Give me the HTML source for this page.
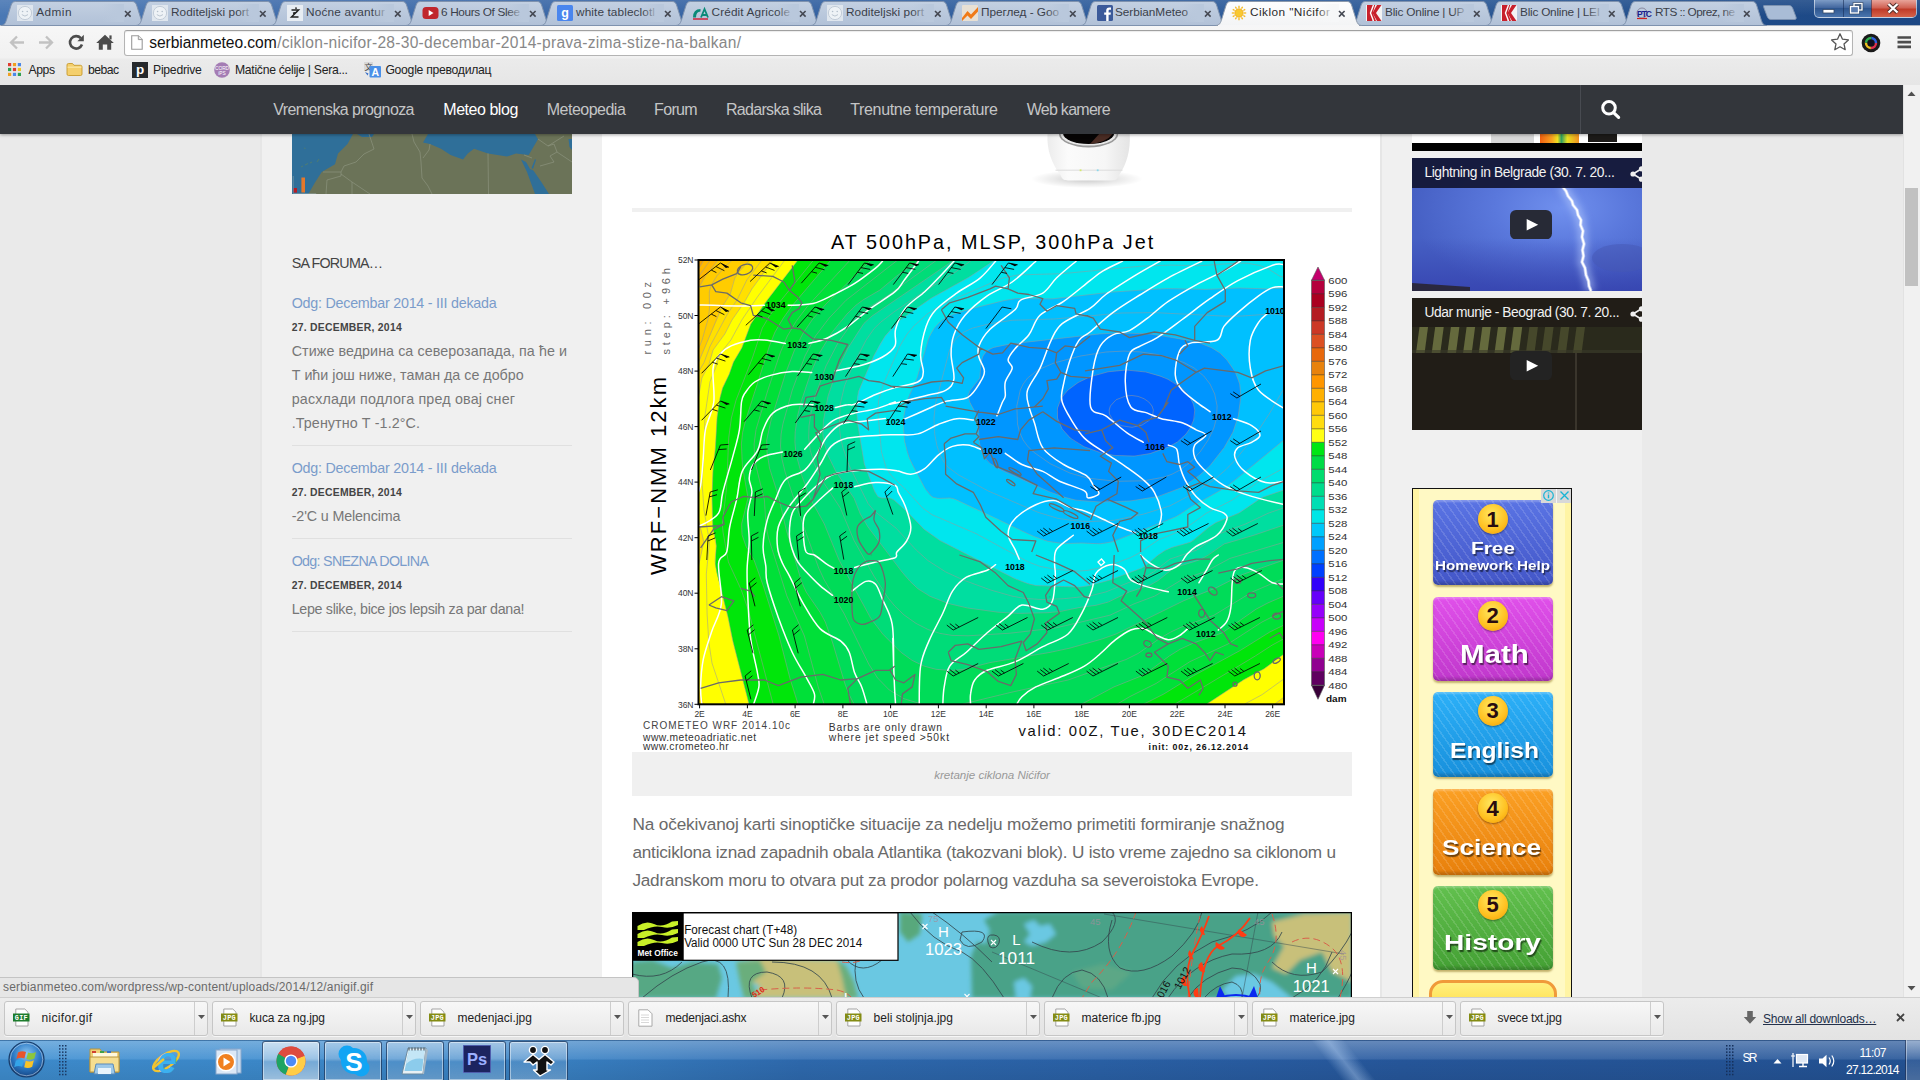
<!DOCTYPE html>
<html lang="sr"><head><meta charset="utf-8"><title>Ciklon "Nićifor"</title>
<style>
*{margin:0;padding:0;box-sizing:border-box}
html,body{width:1920px;height:1080px;overflow:hidden;background:#eaeaea;font-family:"Liberation Sans",sans-serif;color:#444}
.a{position:absolute}
.t{position:absolute;white-space:nowrap;line-height:1;transform-origin:0 50%}
#page{position:absolute;left:0;top:85px;width:1903px;height:912px;overflow:hidden;background:#eaeaea}
#left{position:absolute;left:262px;top:0;width:340px;height:912px;background:#f0f0f0}
#main{position:absolute;left:602px;top:0;width:778px;height:912px;background:#fff}
#rside{position:absolute;left:1382px;top:0;width:260px;height:912px;background:#f0f0f0}
#nav{position:absolute;left:0;top:0;width:1903px;height:49px;background:#33363b;box-shadow:0 1px 3px rgba(0,0,0,.35)}
#nav .t{font-size:16px;color:#c8c8c8;top:16px}
.flink{color:#7a9cc8;font-size:15px}
.fdate{color:#444;font-size:11px;font-weight:bold}
.ftxt{color:#777;font-size:15px}
.hr{position:absolute;left:30px;width:280px;height:1px;background:#e0e0e0}
</style></head><body>
<div id="page">
<div id="left">
<svg class="a" style="left:30px;top:49px" width="280" height="60" viewBox="0 0 280 60">
<rect width="280" height="60" fill="#6b7358"/>
<path d="M0 0 L61 0 L55.500 10 L46 19.400 L43 30.300 L29.700 38 L22.700 49 L16.400 60 L0 60Z" fill="#2f6f99"/>
<path d="M65 0 L70 3 L80 3 L82 0Z" fill="#2f6f99"/>
<path d="M136 0 L131 8.400 L138 10 L149 14.700 L158.600 21 L171 25.600 L175.800 19.400 L182 14.700 L196 19.400 L215 22.500 L224 19.400 L236.700 21 L241.400 13 L246 5.300 L243 0Z" fill="#2f6f99"/>
<path d="M229 25.600 L235 38 L243 60 L257 60 L249 47.500 L241.400 36.600 L238 35 L234 28Z" fill="#2f6f99"/>
<path d="M239.500 34 L243 25 L244 26 L241 35Z" fill="#2f6f99"/><path d="M276.500 5 L280 5 L280 16 L277.500 13Z" fill="#2f6f99"/>
<path d="M9 33l2 -1 M13 31l3-1.500 M18 29l2-1 M25 28l2-3 M12 14l1.500.5" stroke="#4a7a78" stroke-width="1.200"/>
<g fill="none" stroke="#8d937e" stroke-width=".7"><path d="M77 0 L82 15 L72 20 L64 28 L52 32 L49 38 L31 38 M49 38 L49 42 L35 46 L34 60 M49 40 L60 48 L78 60 M60 48 L60 60 M120 0 L122 8 L128 18 L129 28 L130 44 L136 52 L140 60 M131 24 L137 16 L138 10 M196 19.400 L196.500 60 M232 21 L240 24 M246 5 L256 12 L262 10 L265 18 L258 22 L262 28 L248 32 M265 18 L280 28 M256 12 L272 2"/></g>
<rect x="1.600" y="54" width="3.400" height="4.600" fill="#b81c24"/><rect x="9.400" y="43.500" width="3.600" height="15" fill="#e4782c"/><path d="M1.200 42v17.500h23" fill="none" stroke="#9aa" stroke-width=".5"/>
</svg>
<span class="t" style="left:29.7px;top:170.9px;font-size:14.3px;letter-spacing:-0.791px;color:#444;">SA FORUMA…</span>
<span class="t" style="left:29.7px;top:210.7px;font-size:14.3px;letter-spacing:-0.240px;color:#7a9ccb;">Odg: Decembar 2014 - III dekada</span>
<span class="t" style="left:29.7px;top:237.7px;font-size:10.4px;letter-spacing:0.254px;color:#444;font-weight:bold;">27. DECEMBER, 2014</span>
<span class="t" style="left:29.7px;top:258.9px;font-size:14.3px;letter-spacing:0.068px;color:#777;">Стиже ведрина са северозапада, па ће и</span>
<span class="t" style="left:29.7px;top:282.9px;font-size:14.3px;letter-spacing:-0.007px;color:#777;">Т ићи још ниже, таман да се добро</span>
<span class="t" style="left:29.7px;top:306.9px;font-size:14.3px;letter-spacing:0.172px;color:#777;">расхлади подлога пред овај снег</span>
<span class="t" style="left:29.7px;top:330.9px;font-size:14.3px;letter-spacing:0.096px;color:#777;">.Тренутно Т -1.2°C.</span>
<span class="t" style="left:29.7px;top:375.7px;font-size:14.3px;letter-spacing:-0.240px;color:#7a9ccb;">Odg: Decembar 2014 - III dekada</span>
<span class="t" style="left:29.7px;top:402.7px;font-size:10.4px;letter-spacing:0.254px;color:#444;font-weight:bold;">27. DECEMBER, 2014</span>
<span class="t" style="left:29.7px;top:423.9px;font-size:14.3px;letter-spacing:-0.133px;color:#777;">-2&#x27;C u Melencima</span>
<span class="t" style="left:29.7px;top:468.7px;font-size:14.3px;letter-spacing:-0.710px;color:#7a9ccb;">Odg: SNEZNA DOLINA</span>
<span class="t" style="left:29.7px;top:495.7px;font-size:10.4px;letter-spacing:0.254px;color:#444;font-weight:bold;">27. DECEMBER, 2014</span>
<span class="t" style="left:29.7px;top:516.9px;font-size:14.3px;letter-spacing:-0.328px;color:#777;">Lepe slike, bice jos lepsih za par dana!</span>
<div class="hr" style="top:360px"></div><div class="hr" style="top:453px"></div><div class="hr" style="top:546px"></div>
</div>
<div class="a" style="left:260px;top:0;width:2px;height:912px;background:#e6e6e6"></div>
<div id="main">
<div class="a" style="left:30px;top:123px;width:720px;height:4px;background:#f0f0f0"></div>
<div class="a" style="left:30px;top:667px;width:720px;height:44px;background:#f0f0f0"></div>
<span class="t" style="left:30.4px;top:731.4px;font-size:17.2px;letter-spacing:-0.127px;color:#6a6a6a;">Na očekivanoj karti sinoptičke situacije za nedelju možemo primetiti formiranje snažnog</span>
<span class="t" style="left:30.4px;top:759.4px;font-size:17.2px;letter-spacing:-0.219px;color:#6a6a6a;">anticiklona iznad zapadnih obala Atlantika (takozvani blok). U isto vreme zajedno sa ciklonom u</span>
<span class="t" style="left:30.4px;top:787.4px;font-size:17.2px;letter-spacing:-0.232px;color:#6a6a6a;">Jadranskom moru to otvara put za prodor polarnog vazduha sa severoistoka Evrope.</span>
<span class="t" style="left:332.3px;top:683.5px;font-size:11.6px;letter-spacing:-0.041px;color:#999;font-style:italic;">kretanje ciklona Nićifor</span>
<svg class="a" style="left:420px;top:49px" width="140" height="70" viewBox="0 0 140 70">
<defs><radialGradient id="cs" cx=".5" cy=".5" r=".5"><stop offset="0" stop-color="#000" stop-opacity=".22"/><stop offset=".6" stop-color="#000" stop-opacity=".08"/><stop offset="1" stop-color="#000" stop-opacity="0"/></radialGradient>
<linearGradient id="cb" x1="0" y1="0" x2="1" y2="0"><stop offset="0" stop-color="#ececec"/><stop offset=".25" stop-color="#fbfbfb"/><stop offset=".7" stop-color="#f6f6f6"/><stop offset="1" stop-color="#e4e4e4"/></linearGradient></defs>
<ellipse cx="65" cy="45" rx="56" ry="9" fill="url(#cs)"/>
<path d="M25.500 0 C24.500 16 30 30 38.800 41.500 C40 45.500 42.500 46.400 46 46.400 L90 46.400 C93.500 46.400 95.500 45.500 96.800 41.500 C105 30 108.500 16 107.800 0 Z" fill="url(#cb)"/>
<path d="M33.500 36.200 H100.500" stroke="#dcdcdc" stroke-width="1"/>
<ellipse cx="66.600" cy=".4" rx="29.500" ry="13" fill="#9a9a9a"/><ellipse cx="66.600" cy="0" rx="28" ry="11.600" fill="#e8e8e8"/><ellipse cx="66.600" cy="-.5" rx="25.500" ry="10.500" fill="#060404"/>
<path d="M68 10 L78 -1 L91 -1 Q86 8 68 10Z" fill="#4a2c24"/>
<rect x="57.700" y="35.400" width="1.800" height="1.800" fill="#d4e86c"/><rect x="74.800" y="35.400" width="1.800" height="1.800" fill="#8cd8ec"/>
</svg>
<svg class="a" style="left:28px;top:135px" width="730" height="535" viewBox="0 0 730 535" font-family="Liberation Sans, sans-serif">
<defs><clipPath id="pc"><rect x="68.5" y="40" width="585.5" height="444.3"/></clipPath></defs>
<g clip-path="url(#pc)">
<rect x="67.5" y="39" width="587.5" height="446.3" fill="#f09000"/>
<path d="M70 40 654 40 654 484 68 484 68 40 70 40Z" fill="#f5a000"/>
<path d="M74 40 654 40 654 484 68 484 68 50 74 40Z" fill="#ffb800"/>
<path d="M88 40 654 40 654 484 68 484 68 106.6 68.8 96 68 85.5 68 69.2 75.4 56 88 40Z" fill="#ffcc00"/>
<path d="M120 40 654 40 654 484 68 484 68 143.6 87 100 91.4 88 100.3 74 102.5 64 104.8 58 110.4 50 120 40Z" fill="#ffe000"/>
<path d="M142 41.4 143 40 654 40 654 477.1 644.8 484 74 484 68 466.7 68 348.4 73.8 322 73.4 318 68 297.2 68 180.1 71.9 158 79.1 144 83.1 130 94.8 114 102 100 113.2 84 122 68.8 142 41.4Z" fill="#ffff00"/>
<path d="M168 40 654 40 654 434 634 448.8 614 459.6 576.8 484 119 484 103.1 422 97.8 396 87 354 85.2 344 86.3 326 85.7 320 82.8 308 82 276 82.9 252 85.4 228 87 198 90 177.8 92.6 168 99.3 154 103.5 142 111.8 128 120.8 104 134 84.5 168 40Z" fill="#00e60a"/>
<path d="M200 41.1 201 40 654 40 654 405 638 413.1 608 431.7 566 454.3 534 473.9 514 484 168 484 159.8 458 148.4 414 134 368 124.8 342 115.8 326 112.3 316 111.3 308 111.9 302 117 284 118 278 111.9 242 111.5 222 113.1 210 115.7 200 139.4 126 145 112 152 100 162 85.8 200 41.1Z" fill="#00e038"/>
<path d="M240 40.9 241 40 654 40 654 376 638 382.9 626 389.2 592 413 564 422.8 548.8 430 538 436.9 514 454.9 482 467.8 452 484 224 484 219.7 476 215.7 466 203.6 426 195.3 402 191.2 394 176 371.7 170.9 360 156.3 310 148.4 276 140 250 137.4 236 136.7 222 137.2 216 139.4 206 154 158 162.8 134 171.5 116 180.5 102 192 88.3 240 40.9Z" fill="#00dc58"/>
<path d="M288 41.4 290 40 654 40 654 340 612 354.7 586 367.9 552 381.6 486 414 468 420.3 440 428.1 418 432.8 360 442.6 332 449.7 322 450.6 308 449.7 296 446.8 284 441.4 272 433.2 256 417.8 242 400.1 210.9 344 194.3 304 180 278 176 267.7 166.8 238 165.2 228 165 216 165.8 206 167.9 194 176 166 187.8 136 199.4 116 217 94 226 85.2 234 79.3 250 70 268 55 288 41.4Z" fill="#00dc78"/>
<path d="M322 41.5 324 40 654 40 654 305 624 315.2 594 324 572 338.8 564 341.9 548.1 346 544 347.9 528.9 360 520 365.2 499.1 372 478 382.1 466 385.3 420 392.6 390 393.4 372 392.6 342 388.8 320 384 302 377.3 288 368.8 282 363.4 274 354.5 238 307 230.3 294 224 278 211.1 260 205 250 198.2 236 194 222.7 192.8 214 193.5 200 198 176 206.2 152 218 128 226.4 114 233.4 104 242 96 322 41.5Z" fill="#00dea0"/>
<path d="M362 41.8 365.1 40 654 40 654 270 632 277.5 610 292.5 586 302.6 578 307.8 560.9 322 542 327.4 534 331 526.9 336 516 345.6 512 348 480 360 458 365.9 450 367.1 406 365.6 396 363.1 383.3 358 310 320.6 294 309.2 277.4 292 264 280.1 260 278.1 252 278.1 248 276.8 244 270 234.3 244 227.7 204 226.5 190 227.1 178 228.9 170 244 135.4 250 124 255.2 116 261.8 108 270 100 301.5 78 338 57.8 362 41.8Z" fill="#00e6ee"/>
<path d="M610 68 638 68.9 654 68 654 220 605.6 260 594 268.6 562.7 286 550 294.5 542 298.6 486 320.7 476 323.2 466 323.9 452 323 432 323.5 424 322.6 414 320.2 396 313.1 368 299 326 279.5 320 277.9 310 278.5 304 277.8 300 275.3 295.9 270 281.9 244 277 232 273.9 216 273.7 198 276.7 182 279.6 174 287 158 297.9 120 304.4 108 312 100 322 94.8 336 90.2 374 80.6 386 78.6 396 78.2 424 78.8 478 72.5 524 69.1 544 68.5 576 69.4 610 68Z" fill="#00c0ff"/>
<path d="M470 113.9 490 112.9 518 113.7 534 115.9 568 122.5 580 126.9 590 133.1 596.9 140 605.3 152 609.7 164 610.8 178 608.3 196 603 212 593.9 228 579.6 246 568.6 256 552 267.5 530 276 502 280.8 472 282 446 280.2 434 277.1 420 272 371.2 250 360 243.6 356.2 240 353.6 236 351.1 230 349.7 224 347.2 196 339.7 182 338 176 340 170.7 349.9 158 351 142 353.1 136 355.8 132 362.1 128 378 124.4 470 113.9Z" fill="#0096ff"/>
<path d="M478 151.8 498 150 516 152 535.1 158 543.2 162 550 166.5 556 172 560 177.3 563.3 184 564.8 190 564.7 196 563 202 560.2 208 556 214 548 221.6 540 226.3 520 233.6 506 236 486 235.6 472 233.2 454 226.7 442 219.5 432.8 210 428 200 427.2 190 430.3 180 434 174.3 438 170 449 162 462 156 478 151.8Z" fill="#0064ff"/>
<path d="M496 175.9 486 179.8 480.4 186 479.2 190 479.4 194 482.8 200 487.9 204 492 205.8 502 207.3 512 205.1 519.7 200 522.5 196 523.4 190 522 186 518.8 182 514 178.7 508 176.4 502 175.5 496 175.9M478 151.8 460 156.8 448 162.6 438 170 431.4 178 427.5 188 427.5 198 432 208.8 440.2 218 454 226.7 472 233.2 484 235.4 504 236.1 520 233.6 538 227.2 547.4 222 556 214 560.2 208 563.7 200 564.8 190 563.3 184 560 177.3 551.9 168 538 159.3 530 156 515.8 152 496 150 478 151.8M476 132 450 136.1 424 143 407.8 150 397.6 158 393.2 164 390.3 170 386.8 186 387.5 204 389.5 212 393.1 220 397.5 226 403.5 232 420 243.6 440 253.1 458 258.2 486 261.3 514 260.8 534 257.1 542 254.2 550 250 560.5 242 570 232 578.2 220 583.9 208 586.5 198 587.1 186 584.7 174 580 164 573.8 156 564.2 148 554 142.6 542 138.3 526 134.3 510 131.9 494 131.1 476 132M470 113.9 380 124 364 127.3 358 130 355.8 132 353.1 136 351 142 349.9 158 340 170.7 338 176 340 182.6 347.2 196 349.7 224 351.1 230 354 236.6 360.5 244 374 251.3 420 272 434 277.1 446 280.2 470 282 500 281 528 276.5 552 267.5 570 254.9 580 245.6 594 227.8 603 212 608.3 196 610.9 176 609.7 164 605.3 152 596.9 140 590 133.1 582 127.9 570 123.1 554 119.5 520 113.9 488 113 470 113.9M654 96.4 648 94.4 642 93.9 612 96 596 96.2 524 92.6 492 93 424 99 382 100.3 360 103.6 342.8 108 334 112 326.4 118 322 124.6 319 132 305.4 184 304 198 304.7 214 307 226 310 234.7 314 242.2 318 247.1 328 254.6 358 270.9 408 292.3 428 298.4 444 300.7 460 301.6 484 300.3 514 294 540 285.8 562.3 274 583.9 260 596 249.5 605.2 240 623.3 218 639.2 194 654 168.4M654 68 638 68.9 608 68 576 69.4 536 68.6 482 72.1 422 78.9 386 78.6 374 80.6 342 88.6 324 94.1 315.2 98 309.7 102 304 108.5 299.6 116 287 158 276.7 182 274 195.1 273.4 206 274.7 222 279.2 238 294.7 268 302 276.9 308 278.4 320.4 278 324 278.8 404 316.6 418 321.4 434 323.6 452 323 470 323.8 482 321.9 546 296.7 562 286.4 596 267.2 654 220M654 57.2 649.4 56 638 48.7 630 45.5 618 43.3 608 43 570 45.7 540 45.1 512 46.1 432 53.7 388 54.9 372 58.3 312.6 84 297.3 94 283.9 106 277.1 114 269.9 126 253.4 164 248.7 180 247.8 192 251.5 232 256.2 248 262 256.4 276 269.7 292.6 288 302 294.7 346 313.6 398 341.8 410 346.4 424 349.1 446 351.1 458 350.4 478 346 500 337.8 508 333.7 528 320.1 554 309.4 576 293.4 602 280.2 628.1 262 654 248M365.1 40 340 56.6 300 78.9 270 100 255.2 116 243.7 136 228.3 172 226.5 190 227.7 204 234.3 244 244.9 272 248 276.8 252 278.1 260 278.1 264 280.1 278 292.6 294 309.2 310 320.6 386 359.2 398.9 364 406 365.6 450 367.1 460 365.4 480.1 360 512 348 516 345.6 528 335.1 535.9 330 542 327.4 560 322.4 564 320 580 306.4 586 302.6 608 293.6 632 277.5 654 270M341.8 40 326 51.7 290 74.1 263.9 92 250.9 102 244 108.7 236 120.2 221.8 148 214.5 166 210.3 184 209.2 206 210.6 218 213 228 219.4 246 238 283.4 244 290.8 266 308.1 286.2 330 298 340.6 315.8 352 334 360.3 360.7 370 382 376.1 394 378.3 412 379.6 434 378.7 460 375.9 476 371.9 498 362.8 514 357.5 523.4 352 540 339.1 566.8 330 590 313.5 615.5 304 638 293.3 654 287.7M324 40 242 96 234 103.3 218 128 206 152.5 198 176.2 193.5 200 192.8 214 193.8 222 198 235.4 206.1 252 224 278.1 230.3 294 238 307 272 352 280 361.3 288 368.8 300 376.3 318 383.4 337.5 388 368 392.2 388 393.4 418 392.7 430 391.5 450 387.4 466 385.3 478.4 382 499.1 372 520 365.2 528 360.6 544 347.9 570 339.7 578 335.3 594.1 324 624 315.2 654 305M306.9 40 258 75.4 234 90.6 228 96 221.2 104 208 122.9 196 146 185.2 176 180.8 194 179 206 178.7 218 180.2 230 184 243 190.6 258 210.3 288 224 320.4 244 356.2 258.2 378 264.8 386 274 394.9 286 403.4 298 409.5 310 413.4 322 415.4 338 415.8 380 413.2 426 407.9 480 395.2 504 383.9 524.9 376 552 359.6 576 351.3 600 338.4 654 322.3M290 40 266.7 56 250 70 232.9 80 226 85.2 217 94 202 112.3 188.8 134 180.4 154 171 182 167.5 196 165.2 212 164.9 222 166 234 172 256.2 180 278 194.3 304 209 340 240.6 398 252.7 414 270.6 432 282 440.3 294 446.1 306 449.3 322 450.6 334 449.3 360 442.6 420 432.4 440 428.1 472 419 486.1 414 554 380.6 586 367.9 612 354.7 654 340M267.7 40 216 80.3 199.2 98 185.5 116 175 136 162.3 170 152.9 204 151.1 214 150.5 226 151.7 238 155.1 252 166.3 286 188.7 348 194.3 360 214.3 394 238.7 444 247.6 458 259.3 470 274 478.7 291.4 484M332.8 484 382 472.1 438 460 496 439.5 508 433.5 530.4 418 540.8 412 552 406.8 584 395.2 622 372.1 654 358.4M241 40 196 84 182 100 172.6 114 164.5 130 155.3 154 141.1 200 136.7 220 137 232 139.5 248 148.4 276 156 308.9 171.6 362 176.2 372 190 392.2 195.3 402 202.4 422 215 464 218.8 474 224 484M452 484 484 466.9 514 454.9 539.3 436 550 429.3 564 422.8 592 413 626 389.2 638 382.9 654 376M220.2 40 177.7 86 166 101.4 157.4 116 150.5 132 137.9 170 126 209.6 124.1 224 124.5 236 126 246 134.4 280 136 306 138.5 318 156.9 376 174.4 416 188.5 468 194.1 484M487.3 484 500 476.5 526 463.5 560 441.6 598 424 632 402 654 391M201 40 161.9 86 153.3 98 145 112 139.4 126 115.7 200 112.7 212 111.4 224 112.4 246 118 278 111.6 304 112 314.7 116 326.3 124 340 133.3 366 149 416 160 458.6 168 484M514 484 534 473.9 562 456.6 610 430.6 640 411.9 654 405M183.6 40 149.7 82 139.5 96 132.3 108 122.4 138 106 180.3 101.4 198 98.7 218 96.6 268 92.3 304 93 312 98.4 342 111.3 370 118.3 390 143.1 484M545.1 484 625.3 436 642 425.2 654 418.7M168 40 138 79.1 120.8 104 111.8 128 103.5 142 99.3 154 92.6 168 90 178 87.2 196 85.5 226 83 250 82 278 82.8 308 86.3 326 85.1 340 85.5 346 98.2 398 102.6 420 119 484M576.8 484 614 459.6 634 448.8 654 434M154.9 40 128 76.1 111.8 100 100.9 120 89.8 134 85.6 148 80 161.7 74.9 196 74.1 230 72 262 74 290.1 79.5 322 76.3 354 77.1 394 78.8 422 82 443.1 95.7 484M614.7 484 632 474.7 654 458.8M143 40 122 68.8 114.5 82 102 100 94.8 114 83.1 130 79.1 144 71.9 158 68 180.1M68 297.2 73.8 322 68 348.4M644.8 484 654 477.1M131.9 40 116.8 60 107 80 97.4 94 80 126.3 74 142.6 68 152.7M120 40 108.7 52 104.8 58 100.3 74 91.4 88 68 143.6M102.5 40 95.7 46 86.8 56 80.8 66 79.3 72 79.5 88 78.4 98 72.1 120 68 130.2M88 40 75.4 56 68 69.2M68 85.5 68.8 96 68 106.6M80.3 40 68 57.5M74 40 68 50" fill="none" stroke="#9a9a9a" stroke-opacity=".75" stroke-width=".7"/>
<path d="M69.9 84.9C76.0 85.1 95.9 85.8 106.7 85.9C117.4 86.0 129.8 85.4 134.4 85.3M158.1 85.3C162.2 85.0 175.4 85.3 183.1 83.5C190.7 81.7 196.9 77.9 203.9 74.5C210.8 71.1 217.8 67.8 224.7 63.4C231.7 59.0 240.9 51.8 245.6 48.1C250.2 44.4 251.3 42.3 252.5 41.2M65.0 279.2C65.9 276.9 69.2 272.3 70.6 265.3C71.9 258.4 72.5 246.8 73.3 237.6C74.1 228.3 73.7 219.0 75.4 209.8C77.2 200.5 82.5 192.3 83.8 182.0C85.0 171.7 82.0 156.1 83.1 148.1C84.1 140.1 87.0 137.9 90.0 134.2C93.0 130.5 96.0 128.2 101.1 125.9C106.2 123.6 115.0 121.3 120.6 120.3C126.1 119.4 128.7 119.5 134.4 120.1C140.2 120.6 151.8 122.8 155.3 123.4M178.9 123.4C181.9 122.5 190.5 121.1 196.9 118.2C203.4 115.4 210.8 111.2 217.8 106.4C224.7 101.7 230.7 95.6 238.6 89.8C246.5 84.0 259.1 76.6 265.0 71.7C270.9 66.9 270.0 65.7 273.9 60.6C277.8 55.5 286.0 44.4 288.5 41.2M65.0 307.0C66.4 306.5 69.4 306.5 73.3 304.2C77.3 301.9 85.4 298.4 88.6 293.1C91.9 287.8 90.5 281.5 92.8 272.3C95.1 263.0 99.7 248.0 102.5 237.6C105.3 227.1 107.9 219.0 109.4 209.8C110.9 200.5 110.6 188.1 111.5 182.0C112.5 175.9 112.8 176.4 115.0 173.1C117.2 169.8 120.3 165.0 124.7 162.0C129.1 159.0 135.1 156.8 141.4 155.1C147.6 153.3 155.5 152.0 162.2 151.6C168.9 151.2 178.4 152.4 181.7 152.6M205.3 150.9C209.7 150.0 223.8 147.6 231.7 145.3C239.5 143.0 246.9 140.2 252.5 137.0C258.1 133.8 262.8 130.5 265.0 125.9C267.2 121.3 263.8 115.5 265.6 109.2C267.3 103.0 270.4 94.6 275.3 88.4C280.1 82.1 289.2 76.8 294.7 71.7C300.3 66.6 303.8 62.9 308.6 57.8C313.5 52.7 321.3 43.9 323.9 41.2M71.9 485.0C71.7 482.0 70.3 474.6 70.6 466.9C70.8 459.3 71.5 448.4 73.3 439.2C75.2 429.9 78.7 420.6 81.7 411.4C84.7 402.1 90.2 395.0 91.4 383.6C92.5 372.3 87.7 351.9 88.6 343.3C89.5 334.7 94.8 338.1 96.7 332.0C98.5 325.9 98.1 315.8 99.7 307.0C101.4 298.2 104.6 288.5 106.7 279.2C108.8 270.0 108.8 259.5 112.2 251.4C115.7 243.3 124.0 237.6 127.5 230.6C131.0 223.7 130.5 216.0 133.1 209.8C135.6 203.5 137.9 197.3 142.8 193.1C147.6 188.9 155.5 186.2 162.2 184.8C168.9 183.4 179.6 184.8 183.1 184.8M205.3 187.6C207.4 187.1 214.5 185.3 217.8 184.8C221.0 184.2 220.1 185.9 224.7 184.2C229.4 182.5 238.8 177.3 245.6 174.5C252.3 171.7 258.0 169.6 265.0 167.6C272.0 165.5 283.1 164.5 287.8 162.0C292.5 159.5 292.9 156.9 293.3 152.3C293.8 147.6 290.1 141.9 290.6 134.2C291.0 126.6 293.6 113.9 296.1 106.4C298.7 99.0 300.7 95.3 305.8 89.8C310.9 84.2 319.3 78.4 326.7 73.1C334.1 67.8 343.8 63.2 350.3 57.8C356.8 52.5 363.0 43.9 365.6 41.2M123.3 485.0C124.3 482.0 128.2 472.3 128.9 466.9C129.6 461.6 128.9 461.2 127.5 453.1C126.1 445.0 122.2 431.1 120.6 418.3C118.9 405.6 118.4 388.2 117.8 376.7C117.2 365.1 116.9 358.2 117.1 348.9C117.3 339.6 119.1 330.2 119.2 320.9C119.3 311.6 117.3 301.2 117.8 293.1C118.2 285.0 121.7 278.1 121.9 272.3C122.2 266.5 118.9 263.0 119.2 258.4C119.4 253.8 120.8 248.2 123.3 244.5C125.9 240.8 129.6 238.2 134.4 236.2C139.3 234.1 149.5 232.7 152.5 232.0M174.7 229.2C177.3 226.4 185.1 217.4 190.0 212.6C194.9 207.7 198.1 203.3 203.9 200.1C209.7 196.8 217.8 195.0 224.7 193.1C231.7 191.3 238.8 190.8 245.6 188.9C252.3 187.1 262.6 182.8 265.0 182.0C267.4 181.2 255.0 185.2 260.0 184.2C265.0 183.2 285.5 178.2 294.7 175.9C304.0 173.6 310.7 173.1 315.6 170.3C320.4 167.6 323.0 165.2 323.9 159.2C324.8 153.2 321.1 141.6 321.1 134.2C321.1 126.8 321.6 121.3 323.9 114.8C326.2 108.3 329.4 101.8 335.0 95.3C340.6 88.9 349.4 81.4 357.2 75.9C365.1 70.3 374.1 67.8 382.2 62.0C390.3 56.2 401.9 44.6 405.8 41.2M183.1 485.0C183.3 483.1 185.6 478.5 184.4 473.9C183.3 469.3 179.8 464.2 176.1 457.2C172.4 450.3 166.9 442.2 162.2 432.2C157.6 422.3 152.5 409.1 148.3 397.5C144.2 385.9 139.3 371.3 137.2 362.8C135.1 354.2 136.5 352.2 135.8 346.1C135.1 340.1 132.8 334.1 133.1 326.4C133.3 318.8 135.1 307.9 137.2 300.1C139.3 292.2 142.5 285.9 145.6 279.2C148.6 272.5 150.4 264.6 155.3 259.8C160.1 254.9 169.4 254.5 174.7 250.1C180.0 245.7 183.5 238.9 187.2 233.4C190.9 227.8 193.0 221.6 196.9 216.7C200.9 211.9 205.0 206.8 210.8 204.2C216.6 201.7 224.3 202.4 231.7 201.4C239.1 200.5 251.3 198.9 255.3 198.4M273.9 199.4C277.4 197.9 287.8 193.3 294.7 190.3C301.7 187.3 308.4 183.6 315.6 181.4C322.7 179.3 332.0 180.5 337.8 177.3C343.6 174.0 347.5 166.4 350.3 162.0C353.1 157.6 354.7 155.1 354.4 150.9C354.2 146.7 349.8 141.2 348.9 137.0C348.0 132.8 347.0 130.5 348.9 125.9C350.7 121.3 354.0 115.2 360.0 109.2C366.0 103.2 379.9 94.6 385.0 89.8C390.1 84.9 385.9 82.8 390.6 80.1C395.2 77.3 406.8 76.8 412.8 73.1C418.8 69.4 421.1 63.2 426.7 57.8C432.2 52.5 442.9 43.9 446.1 41.2M237.2 485.0C236.3 482.0 233.8 472.3 231.7 466.9C229.6 461.6 226.8 458.8 224.7 453.1C222.6 447.3 221.5 437.5 219.2 432.2C216.9 426.9 215.7 425.0 210.8 421.1C206.0 417.2 196.2 414.9 190.0 408.6C183.8 402.4 178.4 392.4 173.3 383.6C168.2 374.8 162.9 362.5 159.4 355.8C156.0 349.1 154.5 348.0 152.5 343.3C150.5 338.7 148.3 333.9 147.6 327.8C146.9 321.8 146.4 313.9 148.3 307.0C150.3 300.1 154.8 293.1 159.4 286.2C164.1 279.2 171.0 272.3 176.1 265.3C181.2 258.4 185.8 251.0 190.0 244.5C194.2 238.0 196.5 230.8 201.1 226.4C205.7 222.0 209.2 220.0 217.8 218.1C226.3 216.2 244.1 215.6 252.5 215.1C260.9 214.5 262.5 215.0 268.3 214.8C274.2 214.6 281.1 215.7 287.8 213.9C294.5 212.2 302.1 206.8 308.6 204.2C315.1 201.7 320.9 199.4 326.7 198.7C332.5 198.0 340.6 199.8 343.3 200.1M366.9 195.9C367.9 193.6 371.1 185.3 372.5 182.0C373.9 178.7 374.8 179.2 375.3 175.9C375.7 172.6 374.1 166.6 375.3 162.0C376.4 157.4 381.8 151.8 382.2 148.1C382.7 144.4 377.6 143.0 378.1 139.8C378.5 136.5 381.5 132.8 385.0 128.7C388.5 124.5 394.7 120.3 398.9 114.8C403.1 109.2 404.2 100.9 410.0 95.3C415.8 89.8 425.3 87.2 433.6 81.4C441.9 75.7 453.4 65.7 460.0 60.6C466.6 55.5 467.6 54.1 473.1 50.9C478.5 47.6 489.3 42.8 492.5 41.2M202.5 375.3C200.4 373.7 194.4 369.5 190.0 365.6C185.6 361.6 179.8 355.6 176.1 351.7C172.4 347.7 170.1 345.7 167.8 341.9C165.5 338.2 163.6 333.9 162.2 329.2C160.8 324.6 159.4 320.0 159.4 313.9C159.4 307.9 160.4 298.4 162.2 293.1C164.1 287.8 166.4 286.6 170.6 282.0C174.7 277.4 181.7 270.0 187.2 265.3C192.8 260.7 196.5 256.8 203.9 254.2C211.3 251.7 223.6 250.9 231.7 250.1C239.8 249.2 246.6 249.1 252.5 249.2C258.4 249.3 262.2 249.9 266.9 250.8C271.7 251.6 276.2 254.6 280.8 254.2C285.5 253.9 290.1 251.9 294.7 248.7C299.4 245.4 304.0 238.5 308.6 234.8C313.2 231.1 317.6 228.1 322.5 226.4C327.4 224.8 333.1 224.6 337.8 225.1C342.4 225.5 348.2 228.5 350.3 229.2M375.3 233.4C378.1 235.2 385.7 241.5 391.9 244.5C398.2 247.5 406.5 248.7 412.8 251.4C419.0 254.2 422.5 257.9 429.4 261.2C436.4 264.4 449.7 268.1 454.4 270.9C459.2 273.7 455.4 277.4 457.8 277.8C460.2 278.3 468.0 275.8 468.9 273.7C469.8 271.6 465.4 268.3 463.3 265.3C461.2 262.3 461.3 259.1 456.4 255.6C451.4 252.1 440.9 249.1 433.6 244.5C426.3 239.9 417.6 234.8 412.8 227.8C407.9 220.9 406.8 209.8 404.4 202.8C402.1 195.9 400.0 191.6 398.9 186.2C397.7 180.8 395.6 176.7 397.5 170.3C399.4 164.0 406.1 156.4 410.0 148.1C413.9 139.8 417.4 127.7 421.1 120.3C424.8 112.9 425.7 109.0 432.2 103.7C438.7 98.3 452.7 93.2 460.0 88.4C467.3 83.5 468.6 79.8 475.8 74.5C483.1 69.2 494.6 62.0 503.6 56.4C512.6 50.9 525.6 43.7 530.0 41.2M221.9 371.1C224.3 369.5 231.9 362.5 235.8 361.4C239.8 360.2 242.8 361.2 245.6 364.2C248.3 367.2 249.7 372.7 252.5 379.4C255.3 386.2 260.4 393.3 262.2 404.4C264.1 415.6 263.5 443.8 263.6 446.1C263.7 448.4 262.7 416.0 262.8 418.3C262.9 420.6 263.7 448.9 264.2 460.0C264.6 471.1 265.3 480.8 265.6 485.0M224.7 266.7C228.2 266.0 238.8 262.8 245.6 262.6C252.3 262.3 261.2 263.7 265.0 265.3C268.8 267.0 266.6 268.8 268.3 272.3C270.0 275.8 273.2 280.4 275.3 286.2C277.4 292.0 280.6 301.2 280.8 307.0C281.1 312.8 279.0 316.7 276.7 320.9C274.4 325.1 268.9 329.2 266.9 332.0C265.0 334.8 268.6 336.1 265.0 337.8C261.4 339.4 252.3 340.3 245.6 341.9C238.8 343.6 228.2 346.6 224.7 347.5M203.9 348.2C202.5 347.4 198.8 345.5 195.6 343.3C192.3 341.1 187.7 336.9 184.4 335.0C181.2 333.1 178.0 335.5 176.1 332.0C174.3 328.5 173.6 320.0 173.3 313.9C173.1 307.9 172.4 301.2 174.7 295.9C177.0 290.6 182.6 286.6 187.2 282.0C191.9 277.4 200.0 270.4 202.5 268.1M289.2 485.0C289.4 478.5 288.9 456.8 290.6 446.1C292.2 435.5 295.2 429.9 298.9 421.1C302.6 412.3 308.8 401.7 312.8 393.3C316.7 385.0 318.6 377.1 322.5 371.1C326.4 365.1 330.6 360.7 336.4 357.2C342.2 353.8 352.4 352.4 357.2 350.3C362.1 348.2 364.2 345.6 365.6 344.7M389.2 339.2C388.5 337.5 386.9 333.6 385.0 329.4C383.1 325.2 378.1 319.1 378.1 313.9C378.1 308.8 380.4 303.5 385.0 298.7C389.6 293.8 399.4 287.8 405.8 284.8C412.3 281.8 418.1 280.1 423.9 280.6C429.7 281.1 435.5 285.8 440.6 287.6C445.6 289.3 449.7 289.4 454.4 291.0C459.2 292.6 463.0 294.6 468.9 297.3C474.8 299.9 483.7 304.5 489.7 307.0C495.7 309.5 502.5 311.6 505.0 312.6M528.6 307.0C529.1 304.7 532.1 298.9 531.4 293.1C530.7 287.3 527.5 277.8 524.4 272.3C521.4 266.7 518.0 263.9 513.3 259.8C508.7 255.6 502.9 251.7 496.7 247.3C490.4 242.9 482.9 238.2 475.8 233.4C468.8 228.5 460.3 223.9 454.4 218.1C448.6 212.3 444.3 204.7 440.6 198.7C436.9 192.6 433.6 186.7 432.2 182.0C430.8 177.3 431.1 176.9 432.2 170.3C433.4 163.8 436.4 150.9 439.2 142.6C441.9 134.2 445.4 125.4 448.9 120.3C452.4 115.2 454.4 116.6 460.0 112.0C465.6 107.4 474.4 98.8 482.8 92.6C491.2 86.3 501.3 80.3 510.6 74.5C519.8 68.7 528.1 63.4 538.3 57.8C548.5 52.3 566.1 43.9 571.7 41.2M610.6 41.2C607.8 42.8 601.3 47.0 593.9 50.9C586.5 54.8 575.4 59.7 566.1 64.8C556.9 69.9 546.4 75.9 538.3 81.4C530.2 87.0 524.0 93.2 517.5 98.1C511.0 103.0 505.2 107.8 499.4 110.6C493.7 113.4 487.6 112.2 482.8 114.8C477.9 117.3 473.5 120.3 470.3 125.9C467.0 131.4 465.0 137.9 463.3 148.1C461.7 158.3 458.5 179.0 460.6 187.0C462.6 195.0 469.8 191.6 475.8 195.9C481.9 200.1 490.4 208.2 496.7 212.6C502.9 217.0 510.6 220.7 513.3 222.3M538.3 225.1C539.7 225.8 544.8 226.0 546.7 229.2C548.5 232.5 548.1 239.4 549.4 244.5C550.8 249.6 552.2 254.5 555.0 259.8C557.8 265.1 561.9 271.8 566.1 276.4C570.3 281.1 575.4 284.8 580.0 287.6C584.6 290.3 591.1 291.0 593.9 293.1C596.7 295.2 597.8 296.4 596.7 300.1C595.5 303.8 592.0 310.9 586.9 315.3C581.9 319.7 571.2 323.2 566.1 326.4C561.0 329.7 559.2 332.0 556.4 335.0C553.6 338.0 552.9 342.2 549.4 344.7C546.0 347.3 540.4 350.5 535.6 350.3C530.7 350.0 524.4 345.9 520.3 343.3C516.1 340.8 512.2 336.4 510.6 335.0M443.3 315.3C440.6 317.6 429.8 324.6 426.7 329.2C423.5 333.9 424.8 338.9 424.6 343.3C424.4 347.8 425.6 349.6 425.3 355.8C424.9 362.1 424.6 375.3 422.5 380.8C420.4 386.4 417.9 388.5 412.8 389.2C407.7 389.9 397.7 383.8 391.9 385.0C386.2 386.2 383.8 391.5 378.1 396.1C372.3 400.7 364.2 406.8 357.2 412.8C350.3 418.8 342.6 426.7 336.4 432.2C330.1 437.8 323.4 440.3 319.7 446.1C316.0 451.9 315.3 460.5 314.2 466.9C313.0 473.4 313.0 482.0 312.8 485.0M653.6 44.6C651.8 44.8 650.1 42.7 642.5 45.3C634.9 48.0 618.2 55.1 607.8 60.6C597.4 66.2 589.3 72.2 580.0 78.7C570.7 85.1 561.0 93.0 552.2 99.5C543.4 106.0 534.2 113.2 527.2 117.6C520.3 122.0 515.2 123.1 510.6 125.9C505.9 128.7 502.0 128.2 499.4 134.2C496.9 140.2 495.0 153.2 495.3 162.0C495.5 170.8 497.1 181.8 500.8 187.0C504.5 192.2 512.4 191.2 517.5 193.1C522.6 195.1 525.6 197.0 531.4 198.7C537.2 200.3 546.4 201.0 552.2 202.8C558.0 204.7 562.2 207.7 566.1 209.8C570.0 211.9 576.1 212.8 575.8 215.3C575.6 217.9 566.6 221.4 564.7 225.1C562.9 228.8 563.3 233.6 564.7 237.6C566.1 241.5 568.2 244.0 573.1 248.7C577.9 253.3 585.8 260.7 593.9 265.3C602.0 270.0 611.5 273.2 621.7 276.4C631.9 279.7 649.4 283.4 655.0 284.8M340.6 485.0C340.6 483.1 339.9 478.1 340.6 473.9C341.2 469.7 341.9 463.9 344.7 460.0C347.5 456.1 350.5 453.3 357.2 450.3C363.9 447.3 375.7 445.9 385.0 441.9C394.3 438.0 404.0 431.3 412.8 426.7C421.6 422.0 431.3 419.7 437.8 414.2C444.3 408.6 447.6 400.7 451.7 393.3C455.7 385.9 459.5 376.4 461.9 369.7C464.4 363.0 463.1 357.2 466.1 353.1C469.1 348.9 475.4 345.4 480.0 344.7C484.6 344.0 490.4 346.3 493.9 348.9C497.4 351.4 496.9 357.0 500.8 360.0C504.8 363.0 511.2 365.0 517.5 366.9C523.8 368.9 534.9 371.0 538.3 371.8M568.9 362.8C570.3 360.5 574.9 352.8 577.2 348.9C579.5 345.0 580.9 341.5 582.8 339.2C584.6 336.9 587.4 335.7 588.3 335.0M653.6 66.9C651.8 67.0 646.7 66.1 642.5 67.6C638.3 69.1 634.4 71.7 628.6 75.9C622.8 80.1 613.6 87.5 607.8 92.6C602.0 97.6 597.4 101.8 593.9 106.4C590.4 111.1 592.5 117.6 586.9 120.3C581.4 123.1 566.8 121.3 560.6 123.1C554.3 125.0 552.0 126.1 549.4 131.4C546.9 136.8 544.8 148.6 545.3 155.1C545.7 161.5 547.6 165.0 552.2 170.3C556.9 175.7 570.7 185.1 573.1 187.0C575.4 188.9 565.0 181.2 566.1 182.0C567.3 182.8 577.7 190.1 580.0 191.7M603.6 198.7C606.6 199.8 617.3 202.8 621.7 205.6C626.1 208.4 630.0 212.6 630.0 215.3C630.0 218.1 625.4 220.2 621.7 222.3C618.0 224.4 610.6 225.3 607.8 227.8C605.0 230.4 603.8 233.6 605.0 237.6C606.2 241.5 609.6 247.3 614.7 251.4C619.8 255.6 628.8 260.9 635.6 262.6C642.3 264.2 651.8 261.4 655.0 261.2M386.4 485.0C387.3 483.6 388.7 479.7 391.9 476.7C395.2 473.7 398.9 470.4 405.8 466.9C412.8 463.5 425.5 459.3 433.6 455.8C441.7 452.4 448.6 449.6 454.4 446.1C460.3 442.6 463.7 439.4 468.9 435.0C474.1 430.6 480.2 423.9 485.6 419.7C490.9 415.6 496.2 411.9 500.8 410.0C505.5 408.1 509.4 407.9 513.3 408.6C517.3 409.3 520.3 412.3 524.4 414.2C528.6 416.0 534.2 419.5 538.3 419.7C542.5 420.0 546.2 417.4 549.4 415.6C552.7 413.7 556.4 409.8 557.8 408.6M588.3 410.0C589.7 408.6 594.6 405.4 596.7 401.7C598.8 398.0 599.9 394.3 600.8 387.8C601.8 381.3 601.5 369.0 602.2 362.8C602.9 356.5 602.9 352.8 605.0 350.3C607.1 347.7 610.8 347.0 614.7 347.5C618.7 348.0 624.0 350.5 628.6 353.1C633.2 355.6 638.1 360.9 642.5 362.8C646.9 364.6 652.9 363.9 655.0 364.2M653.6 188.2C649.4 185.3 634.2 177.0 628.6 170.3C623.1 163.6 621.7 156.4 620.3 148.1C618.9 139.8 618.9 128.0 620.3 120.3C621.7 112.7 625.8 106.7 628.6 102.3C631.4 97.9 635.6 95.3 636.9 93.9" fill="none" stroke="#fff" stroke-width="1.5" stroke-linecap="round"/>
<path d="M468 342l3.5-3 3 3.5-3.5 3z" fill="none" stroke="#fff" stroke-width="1.3"/>
<path d="M69.9 66.9 81.7 64.8 92.8 59.2 106.7 53.7 110.8 46.7M81.7 64.8 85.8 71.7 96.9 73.1 110.8 82.8 120.6 85.6 123.3 95.3 135.8 98.1 142.8 102.3 153.9 109.2 162.2 107.8 170.6 109.2 183.1 118.9 201.1 120.3 217.8 124.5 209.4 139.8 203.9 155.1 202.5 162.0 190.0 166.2 185.8 175.9 176.1 177.3 173.3 187.0M123.3 55.1 142.8 56.4 153.9 62.0 159.4 70.3 167.8 77.3 171.9 82.8 169.2 88.4 162.2 92.6 158.1 99.5 162.2 107.8M162.2 45.3 165.0 62.0 159.4 70.3M202.5 162.0 217.8 159.2 228.9 156.4 238.6 160.6 249.7 162.0 265.0 167.6M260.0 166.2 280.8 167.6 301.7 162.0 318.3 160.6 332.2 163.4 333.6 157.8 326.7 148.1 332.2 142.6 348.9 134.2 350.3 128.7M311.4 89.8 319.7 82.8 337.8 77.3 360.0 68.9 365.6 66.2 378.1 68.9 379.4 57.8 371.1 45.3M311.4 89.8 318.3 102.3 332.2 114.8 348.9 127.3 362.8 134.2 372.5 132.8 380.8 123.1 398.9 127.3 415.6 128.7 426.7 132.8 425.3 142.6 430.8 152.3 426.7 159.2 416.9 160.6 418.3 168.9 412.8 178.7 404.4 187.0M378.1 68.9 387.8 73.1 398.9 74.5 412.8 78.7 410.0 84.2 416.9 91.2 426.7 85.6 444.7 88.4 446.1 93.9 460.0 96.7M426.7 132.8 435.0 125.9 446.1 127.3 460.0 116.2M430.8 152.3 440.6 156.4 460.0 157.8M268.3 187.0 278.1 181.4 294.7 178.7 311.4 177.3 315.6 184.2M584.2 41.2 586.9 55.1 595.3 70.3 595.3 81.4 577.2 92.6 564.7 106.4 564.7 120.3M455.0 95.3 463.3 98.1 470.3 109.2 489.7 112.0 499.4 117.6 524.4 112.0 545.3 114.8 564.7 120.3 580.0 123.1M455.0 150.9 489.7 145.3 513.3 134.2 531.4 135.6 545.3 139.8 566.1 152.3 574.4 148.1 607.8 152.3 621.7 157.8 635.6 150.9 655.0 145.3M549.4 134.2 557.8 125.9 555.0 120.3M566.1 152.3 552.2 162.0 541.1 170.3 534.2 187.0M607.8 41.2 602.2 45.3 586.9 55.1M70.6 327.8 83.1 309.8 94.2 304.2 92.8 297.3 101.1 282.0 113.6 276.4 127.5 277.8 137.2 276.4 148.3 282.0 162.2 287.6 176.1 286.2 183.1 279.2 195.6 257.0 203.9 254.2 224.7 250.1 238.6 251.4 252.5 258.4 265.0 265.3M69.2 307.0 88.6 305.6 94.2 304.2M183.1 279.2 185.8 270.9 190.0 254.2 187.2 237.6 191.4 223.7 185.8 212.6 198.3 207.0 217.8 200.1 231.7 204.2 238.6 209.8 237.2 198.7 245.6 193.1 265.0 190.3M170.6 197.3 184.4 194.5 184.4 207.0 190.0 213.9M314.2 223.7 321.1 218.1 335.0 213.9 346.1 213.9M314.2 223.7 315.6 240.3 315.6 254.2 326.7 263.9 343.3 272.3 350.3 284.8 355.8 297.3 371.1 311.2 382.2 319.5 405.8 320.9 401.7 332.0M343.3 222.3 351.7 227.8 354.4 238.9 360.0 232.0 365.6 245.9 385.0 254.2 407.2 265.3 403.1 273.7 426.7 279.2 443.3 288.9 460.0 297.3M346.1 213.9 348.9 207.0 344.7 198.7 348.9 190.3M343.3 222.3 348.9 216.7 346.1 213.9M315.6 186.2 346.1 191.7 368.3 194.5 385.0 188.9 412.8 186.2M348.9 219.5 368.3 216.7 387.8 219.5 390.6 209.8 398.9 200.1 412.8 191.7M397.5 240.3 398.9 230.6 423.9 227.8 440.6 229.2 460.0 230.6M397.5 240.3 407.2 254.2 419.7 265.3 433.6 277.8M412.8 191.7 426.7 201.4 444.7 209.8 460.0 211.2M455.0 213.9 471.7 209.8 475.8 220.9 482.8 227.8 470.3 236.2 481.4 243.1 478.6 251.4 488.3 261.2 486.9 273.7 477.2 279.2 466.1 286.2 460.6 300.1M538.3 182.0 527.2 197.3 513.3 201.4 507.8 205.6 516.1 212.6 518.9 222.3M471.7 209.8 489.7 200.1 507.8 205.6M532.8 233.4 536.9 241.7 549.4 244.5 557.8 241.7 564.7 247.3 557.8 251.4 564.7 257.0 570.3 262.6 580.0 266.7 607.8 270.9 628.6 272.3 642.5 265.3 655.0 261.2M570.3 262.6 556.4 268.1 560.6 279.2 570.3 287.6 557.8 294.5 557.8 307.0 538.3 311.2 524.4 313.9 510.6 320.9 510.6 332.0M477.2 279.2 496.7 287.6 507.8 293.1 500.8 298.7 489.7 301.4 482.8 315.3 488.3 332.0M78.9 385.0 91.4 376.7 103.9 380.8 96.9 390.6 85.8 387.8 78.9 385.0M110.8 368.3 120.6 371.1 124.7 376.7M70.6 468.3 88.6 462.8 110.8 460.0 134.4 460.0 148.3 465.6 170.6 457.2 192.8 454.4 210.8 460.0 227.5 458.6 245.6 450.3 259.4 450.3 265.0 446.1M227.5 458.6 217.8 468.3 220.6 485.0M329.4 335.0 350.3 341.9 365.6 353.1 378.1 365.6 393.3 372.5 398.9 383.6 404.4 398.9 400.3 414.2 393.3 422.5 396.1 430.8 407.2 423.9 416.9 412.8 415.6 403.1 429.4 393.3 426.7 386.4 416.9 382.2 415.6 375.3 421.1 366.9 433.6 360.0 444.7 365.6 454.4 376.7 460.0 378.1M405.8 335.0 426.7 343.3 444.7 351.7 460.0 364.2M318.3 432.2 325.3 425.3 337.8 423.9 348.9 429.4 371.1 426.7 391.9 421.1 385.0 439.2 386.4 454.4 380.8 465.6 368.3 461.4 357.2 451.7 337.8 444.7 321.1 440.6 318.3 432.2M260.0 450.3 265.6 460.0 273.9 462.8 285.0 454.4 282.2 466.9 272.5 473.9 271.1 485.0M484.2 335.0 482.8 362.8 496.7 371.1 491.1 380.8 502.2 390.6 514.7 401.7 527.2 418.3 538.3 423.9 524.4 432.2 538.3 446.1 536.9 457.2 549.4 460.0 557.8 468.3 570.3 460.0 573.1 468.3 568.9 475.3M510.6 335.0 516.1 347.5 532.8 348.9 545.3 343.3 566.1 339.2 580.0 339.2M506.4 376.7 510.6 369.7 516.1 347.5M563.3 373.9 573.1 389.2 580.0 400.3 593.9 412.8 600.8 423.9 607.8 426.7M538.3 423.9 552.2 418.3 566.1 423.9 574.4 432.2 580.0 440.6 585.6 432.2 593.9 435.0M588.3 353.1 607.8 348.9 621.7 343.3 639.7 340.6 655.0 339.2M646.7 362.8 655.0 371.1M642.5 396.1 655.0 390.6M639.7 418.3 649.4 412.8 655.0 421.1M245.6 290.3C245.3 291.9 243.4 296.7 244.0 300.0C244.6 303.3 248.2 306.3 249.0 310.0C249.8 313.7 250.2 318.3 249.0 322.0C247.8 325.7 243.8 330.0 242.0 332.0C240.2 334.0 239.7 335.0 238.0 334.0C236.3 333.0 233.7 328.7 232.0 326.0C230.3 323.3 228.8 321.2 228.0 318.0C227.2 314.8 226.5 310.0 227.5 307.0C228.5 304.0 231.8 301.8 234.0 300.0C236.2 298.2 239.1 297.6 241.0 296.0C242.9 294.4 244.8 291.2 245.6 290.3M241.4 340.6C242.8 341.0 247.4 339.6 249.7 343.3C252.0 347.0 254.8 356.7 255.3 362.8C255.8 368.9 253.9 374.5 253.0 380.0C252.1 385.5 251.9 392.3 249.7 396.0C247.5 399.7 243.0 400.6 240.0 402.0C237.0 403.4 234.5 404.9 231.7 404.4C228.9 403.9 224.9 403.3 223.3 398.9C221.7 394.5 221.9 384.5 221.9 378.0C221.9 371.5 222.0 365.0 223.0 360.0C224.0 355.0 226.0 351.0 228.0 348.0C230.0 345.0 232.8 343.2 235.0 342.0C237.2 340.8 240.3 340.8 241.4 340.6" fill="none" stroke="#6a6a6a" stroke-width="1.3" stroke-linejoin="round"/>
<g fill="none" stroke="#686868" stroke-width="1.3"><ellipse cx="115.0" cy="49.5" rx="8.0" ry="5.0" transform="rotate(-20 115.0 49.5)"/><ellipse cx="365.6" cy="243.1" rx="1.5" ry="5.0" transform="rotate(-20 365.6 243.1)"/><ellipse cx="385.0" cy="251.4" rx="7.0" ry="1.6" transform="rotate(30 385.0 251.4)"/><ellipse cx="380.8" cy="262.6" rx="5.0" ry="1.5" transform="rotate(35 380.8 262.6)"/><ellipse cx="426.7" cy="287.6" rx="8.0" ry="2.0" transform="rotate(25 426.7 287.6)"/><ellipse cx="440.6" cy="294.5" rx="8.0" ry="2.0" transform="rotate(25 440.6 294.5)"/><ellipse cx="582.8" cy="371.1" rx="5.0" ry="3.0" transform="rotate(40 582.8 371.1)"/><ellipse cx="607.8" cy="361.4" rx="3.0" ry="2.0" transform="rotate(0 607.8 361.4)"/><ellipse cx="621.7" cy="375.3" rx="4.0" ry="2.5" transform="rotate(0 621.7 375.3)"/><ellipse cx="517.5" cy="423.9" rx="4.0" ry="3.0" transform="rotate(30 517.5 423.9)"/><ellipse cx="518.9" cy="435.0" rx="3.0" ry="2.0" transform="rotate(0 518.9 435.0)"/><ellipse cx="571.7" cy="393.3" rx="3.0" ry="4.0" transform="rotate(0 571.7 393.3)"/><ellipse cx="646.7" cy="396.1" rx="4.0" ry="3.0" transform="rotate(0 646.7 396.1)"/><ellipse cx="627.2" cy="455.8" rx="3.0" ry="4.0" transform="rotate(0 627.2 455.8)"/><ellipse cx="605.0" cy="464.2" rx="2.0" ry="2.0" transform="rotate(0 605.0 464.2)"/><ellipse cx="646.7" cy="440.6" rx="4.0" ry="2.0" transform="rotate(-30 646.7 440.6)"/><ellipse cx="419.7" cy="376.7" rx="0.1" ry="0.1" transform="rotate(0 419.7 376.7)"/><ellipse cx="241.4" cy="335.0" rx="0.1" ry="0.1" transform="rotate(0 241.4 335.0)"/></g>
<path d="M90.4 43.0 L69.1 59.5M90.4 43.0 l8.5 4.2M85.9 46.5 l8.5 4.2M81.3 50.1 l5.1 2.5M139.8 43.0 L120.1 61.5M139.8 43.0 l8.9 3.4M135.6 47.0 l8.9 3.4M131.3 50.9 l5.3 2.0M189.1 43.0 L171.3 63.2M189.1 43.0 l9.2 2.5M185.3 47.3 l9.2 2.5M181.5 51.7 l5.5 1.5M234.4 43.0 L218.1 64.6M234.4 43.0 l9.3 1.8M230.9 47.6 l9.3 1.8M227.4 52.3 l5.6 1.1M279.6 43.0 L263.3 64.6M279.6 43.0 l9.3 1.8M276.1 47.6 l9.3 1.8M272.6 52.3 l5.6 1.1M324.8 43.0 L308.6 64.6M324.8 43.0 l9.3 1.8M321.3 47.6 l9.3 1.8M317.8 52.3 l5.6 1.1M378.3 43.0 L362.0 64.6M378.3 43.0 l9.3 1.8M374.8 47.6 l9.3 1.8M371.3 52.3 l5.6 1.1M90.4 87.0 L69.1 103.5M90.4 87.0 l8.5 4.2M85.9 90.5 l8.5 4.2M81.3 94.1 l5.1 2.5M135.7 87.0 L115.8 105.3M135.7 87.0 l8.9 3.5M131.4 90.9 l8.9 3.5M127.2 94.9 l5.3 2.1M185.0 87.0 L167.0 107.1M185.0 87.0 l9.2 2.6M181.1 91.3 l9.2 2.6M177.3 95.6 l5.5 1.6M232.3 87.0 L216.1 108.6M232.3 87.0 l9.3 1.8M228.8 91.6 l9.3 1.8M225.3 96.3 l5.6 1.1M277.5 87.0 L261.3 108.6M277.5 87.0 l9.3 1.8M274.0 91.6 l9.3 1.8M270.6 96.3 l5.6 1.1M324.8 87.0 L308.6 108.6M324.8 87.0 l9.3 1.8M321.3 91.6 l9.3 1.8M317.8 96.3 l5.6 1.1M372.1 87.0 L355.9 108.6M372.1 87.0 l9.3 1.8M90.4 134.0 L71.6 153.3M90.4 134.0 l9.0 3.0M86.4 138.1 l9.0 3.0M82.3 142.3 l5.4 1.8M135.7 134.0 L118.4 154.7M135.7 134.0 l9.2 2.3M132.0 138.5 l9.2 2.3M128.2 142.9 l5.5 1.4M183.0 134.0 L167.4 156.1M183.0 134.0 l9.4 1.5M179.6 138.7 l9.4 1.5M176.3 143.5 l5.6 0.9M230.2 134.0 L215.5 156.6M230.2 134.0 l9.4 1.2M227.1 138.9 l9.4 1.2M223.9 143.7 l5.7 0.7M277.5 134.0 L262.8 156.6M277.5 134.0 l9.4 1.2M274.4 138.9 l9.4 1.2M271.2 143.7 l5.7 0.7M90.4 181.0 L71.6 200.3M90.4 181.0 l9.0 3.0M86.4 185.1 l9.0 3.0M82.3 189.3 l5.4 1.8M131.6 181.0 L114.1 201.6M131.6 181.0 l9.2 2.3M127.8 185.4 l9.2 2.3M124.1 189.9 l5.5 1.4M180.9 181.0 L165.3 203.0M180.9 181.0 l9.4 1.5M177.6 185.7 l9.4 1.5M174.2 190.5 l5.6 0.9M228.2 181.0 L213.5 203.6M228.2 181.0 l9.4 1.2M225.0 185.9 l9.4 1.2M221.9 190.7 l5.7 0.7M271.4 181.0 L256.7 203.6M271.4 181.0 l9.4 1.2M268.2 185.9 l9.4 1.2M265.1 190.7 l5.7 0.7M90.4 225.0 L80.3 250.0M90.4 225.0 l8.0 -0.6M88.6 229.6 l8.0 -0.6M131.6 225.0 L121.5 250.0M131.6 225.0 l8.0 -0.6M129.7 229.6 l8.0 -0.6M217.9 225.0 L217.0 252.0M217.9 225.0 l7.3 -3.3M217.7 230.0 l7.3 -3.3M80.2 272.0 L75.9 295.6M80.2 272.0 l7.7 -2.2M79.3 276.9 l7.7 -2.2M125.4 272.0 L124.3 296.0M125.4 272.0 l7.4 -3.2M125.2 277.0 l7.4 -3.2M168.6 272.0 L170.6 295.9M168.6 272.0 l6.9 -4.1M169.0 277.0 l6.9 -4.1M211.7 272.0 L216.8 295.5M211.7 272.0 l6.3 -5.0M212.8 276.9 l6.3 -5.0M254.9 272.0 L262.9 294.6M254.9 272.0 l5.6 -5.7M256.6 276.7 l5.6 -5.7M78.1 316.0 L76.8 340.0M78.1 316.0 l7.4 -3.1M77.8 321.0 l7.4 -3.1M121.3 316.0 L121.8 340.0M121.3 316.0 l7.1 -3.7M121.4 321.0 l7.1 -3.7M166.5 316.0 L168.9 339.9M166.5 316.0 l6.8 -4.2M167.0 321.0 l6.8 -4.2M209.7 316.0 L213.8 339.6M209.7 316.0 l6.5 -4.7M210.6 320.9 l6.5 -4.7M119.2 363.0 L125.0 386.3M119.2 363.0 l6.1 -5.2M120.4 367.9 l6.1 -5.2M164.5 363.0 L170.3 386.3M164.5 363.0 l6.1 -5.2M165.7 367.9 l6.1 -5.2M117.2 410.0 L123.0 433.3M117.2 410.0 l6.1 -5.2M118.4 414.9 l6.1 -5.2M162.4 410.0 L168.2 433.3M162.4 410.0 l6.1 -5.2M163.6 414.9 l6.1 -5.2M115.1 456.0 L120.9 479.3M115.1 456.0 l6.1 -5.2M116.3 460.9 l6.1 -5.2M606.9 178.0 L631.0 164.0M606.9 178.0 l-6.6 -4.4M609.8 176.3 l-6.6 -4.4M557.5 225.0 L581.6 211.0M557.5 225.0 l-6.6 -4.4M560.5 223.3 l-6.6 -4.4M606.9 225.0 L631.0 211.0M606.9 225.0 l-6.6 -4.4M609.8 223.3 l-6.6 -4.4M467.1 271.0 L491.2 257.0M467.1 271.0 l-6.6 -4.4M470.0 269.3 l-6.6 -4.4M512.3 271.0 L536.4 257.0M512.3 271.0 l-6.6 -4.4M515.2 269.3 l-6.6 -4.4M559.6 271.0 L583.7 257.0M559.6 271.0 l-6.6 -4.4M562.5 269.3 l-6.6 -4.4M606.9 271.0 L631.0 257.0M606.9 271.0 l-6.6 -4.4M609.8 269.3 l-6.6 -4.4M413.6 316.0 L438.7 303.5M413.6 316.0 l-6.4 -4.9M416.7 314.5 l-6.4 -4.9M419.7 313.0 l-6.4 -4.9M422.7 311.4 l-3.8 -2.9M463.0 316.0 L488.0 303.5M463.0 316.0 l-6.4 -4.9M466.0 314.5 l-6.4 -4.9M469.0 313.0 l-6.4 -4.9M472.1 311.4 l-3.8 -2.9M508.2 316.0 L533.2 303.5M508.2 316.0 l-6.4 -4.9M511.2 314.5 l-6.4 -4.9M514.3 313.0 l-6.4 -4.9M517.3 311.4 l-3.8 -2.9M553.4 316.0 L578.5 303.5M553.4 316.0 l-6.4 -4.9M556.5 314.5 l-6.4 -4.9M559.5 313.0 l-6.4 -4.9M562.5 311.4 l-3.8 -2.9M602.8 316.0 L627.8 303.5M602.8 316.0 l-6.4 -4.9M605.8 314.5 l-6.4 -4.9M608.8 313.0 l-6.4 -4.9M611.9 311.4 l-3.8 -2.9M417.7 363.0 L442.8 350.5M417.7 363.0 l-6.4 -4.9M420.8 361.5 l-6.4 -4.9M423.8 360.0 l-6.4 -4.9M426.8 358.4 l-3.8 -2.9M463.0 363.0 L488.0 350.5M463.0 363.0 l-6.4 -4.9M466.0 361.5 l-6.4 -4.9M469.0 360.0 l-6.4 -4.9M472.1 358.4 l-3.8 -2.9M508.2 363.0 L533.2 350.5M508.2 363.0 l-6.4 -4.9M511.2 361.5 l-6.4 -4.9M514.3 360.0 l-6.4 -4.9M517.3 358.4 l-3.8 -2.9M557.5 363.0 L582.6 350.5M557.5 363.0 l-6.4 -4.9M560.6 361.5 l-6.4 -4.9M563.6 360.0 l-6.4 -4.9M566.7 358.4 l-3.8 -2.9M606.9 363.0 L631.9 350.5M606.9 363.0 l-6.4 -4.9M609.9 361.5 l-6.4 -4.9M613.0 360.0 l-6.4 -4.9M616.0 358.4 l-3.8 -2.9M323.2 410.0 L348.2 397.5M323.2 410.0 l-6.4 -4.9M326.2 408.5 l-6.4 -4.9M329.2 407.0 l-3.8 -2.9M372.5 410.0 L397.5 397.5M372.5 410.0 l-6.4 -4.9M375.5 408.5 l-6.4 -4.9M378.6 407.0 l-3.8 -2.9M417.7 410.0 L442.8 397.5M417.7 410.0 l-6.4 -4.9M420.8 408.5 l-6.4 -4.9M423.8 407.0 l-6.4 -4.9M426.8 405.4 l-3.8 -2.9M463.0 410.0 L488.0 397.5M463.0 410.0 l-6.4 -4.9M466.0 408.5 l-6.4 -4.9M469.0 407.0 l-6.4 -4.9M472.1 405.4 l-3.8 -2.9M512.3 410.0 L537.3 397.5M512.3 410.0 l-6.4 -4.9M515.3 408.5 l-6.4 -4.9M518.4 407.0 l-6.4 -4.9M521.4 405.4 l-3.8 -2.9M559.6 410.0 L584.6 397.5M559.6 410.0 l-6.4 -4.9M562.6 408.5 l-6.4 -4.9M565.7 407.0 l-6.4 -4.9M568.7 405.4 l-3.8 -2.9M604.8 410.0 L629.9 397.5M604.8 410.0 l-6.4 -4.9M607.9 408.5 l-6.4 -4.9M610.9 407.0 l-6.4 -4.9M613.9 405.4 l-3.8 -2.9M323.2 456.0 L348.2 443.5M323.2 456.0 l-6.4 -4.9M326.2 454.5 l-6.4 -4.9M329.2 453.0 l-3.8 -2.9M368.4 456.0 L393.4 443.5M368.4 456.0 l-6.4 -4.9M371.4 454.5 l-6.4 -4.9M374.5 453.0 l-3.8 -2.9M413.6 456.0 L438.7 443.5M413.6 456.0 l-6.4 -4.9M416.7 454.5 l-6.4 -4.9M419.7 453.0 l-6.4 -4.9M422.7 451.4 l-3.8 -2.9M463.0 456.0 L488.0 443.5M463.0 456.0 l-6.4 -4.9M466.0 454.5 l-6.4 -4.9M469.0 453.0 l-6.4 -4.9M472.1 451.4 l-3.8 -2.9M512.3 456.0 L537.3 443.5M512.3 456.0 l-6.4 -4.9M515.3 454.5 l-6.4 -4.9M518.4 453.0 l-6.4 -4.9M521.4 451.4 l-3.8 -2.9M557.5 456.0 L582.6 443.5M557.5 456.0 l-6.4 -4.9M560.6 454.5 l-6.4 -4.9M563.6 453.0 l-6.4 -4.9M566.7 451.4 l-3.8 -2.9M604.8 456.0 L629.9 443.5M604.8 456.0 l-6.4 -4.9M607.9 454.5 l-6.4 -4.9M610.9 453.0 l-6.4 -4.9M613.9 451.4 l-3.8 -2.9" fill="none" stroke="#000" stroke-width=".85"/><path d="M90.4 43.0 l8.5 4.2 l-3.0 0.7ZM139.8 43.0 l8.9 3.4 l-2.9 1.0ZM189.1 43.0 l9.2 2.5 l-2.8 1.3ZM234.4 43.0 l9.3 1.8 l-2.7 1.5ZM279.6 43.0 l9.3 1.8 l-2.7 1.5ZM324.8 43.0 l9.3 1.8 l-2.7 1.5ZM378.3 43.0 l9.3 1.8 l-2.7 1.5ZM90.4 87.0 l8.5 4.2 l-3.0 0.7ZM135.7 87.0 l8.9 3.5 l-2.9 1.0ZM185.0 87.0 l9.2 2.6 l-2.8 1.2ZM232.3 87.0 l9.3 1.8 l-2.7 1.5ZM277.5 87.0 l9.3 1.8 l-2.7 1.5ZM324.8 87.0 l9.3 1.8 l-2.7 1.5ZM90.4 134.0 l9.0 3.0 l-2.9 1.1ZM135.7 134.0 l9.2 2.3 l-2.8 1.3ZM183.0 134.0 l9.4 1.5 l-2.7 1.6ZM230.2 134.0 l9.4 1.2 l-2.6 1.7ZM277.5 134.0 l9.4 1.2 l-2.6 1.7ZM90.4 181.0 l9.0 3.0 l-2.9 1.1ZM131.6 181.0 l9.2 2.3 l-2.8 1.3ZM180.9 181.0 l9.4 1.5 l-2.7 1.6ZM228.2 181.0 l9.4 1.2 l-2.6 1.7ZM271.4 181.0 l9.4 1.2 l-2.6 1.7Z" fill="#000"/>
<text x="145.8" y="88.0" font-size="8.6" font-weight="bold" fill="#000" text-anchor="middle" textLength="19.5" lengthAdjust="spacingAndGlyphs">1034</text><text x="167.1" y="128.3" font-size="8.6" font-weight="bold" fill="#000" text-anchor="middle" textLength="19.5" lengthAdjust="spacingAndGlyphs">1032</text><text x="194.2" y="159.5" font-size="8.6" font-weight="bold" fill="#000" text-anchor="middle" textLength="19.5" lengthAdjust="spacingAndGlyphs">1030</text><text x="194.2" y="191.3" font-size="8.6" font-weight="bold" fill="#000" text-anchor="middle" textLength="19.5" lengthAdjust="spacingAndGlyphs">1028</text><text x="162.9" y="236.5" font-size="8.6" font-weight="bold" fill="#000" text-anchor="middle" textLength="19.5" lengthAdjust="spacingAndGlyphs">1026</text><text x="265.6" y="204.5" font-size="8.6" font-weight="bold" fill="#000" text-anchor="middle" textLength="19.5" lengthAdjust="spacingAndGlyphs">1024</text><text x="355.8" y="205.2" font-size="8.6" font-weight="bold" fill="#000" text-anchor="middle" textLength="19.5" lengthAdjust="spacingAndGlyphs">1022</text><text x="362.8" y="233.7" font-size="8.6" font-weight="bold" fill="#000" text-anchor="middle" textLength="19.5" lengthAdjust="spacingAndGlyphs">1020</text><text x="213.6" y="268.4" font-size="8.6" font-weight="bold" fill="#000" text-anchor="middle" textLength="19.5" lengthAdjust="spacingAndGlyphs">1018</text><text x="213.6" y="354.1" font-size="8.6" font-weight="bold" fill="#000" text-anchor="middle" textLength="19.5" lengthAdjust="spacingAndGlyphs">1018</text><text x="213.6" y="382.5" font-size="8.6" font-weight="bold" fill="#000" text-anchor="middle" textLength="19.5" lengthAdjust="spacingAndGlyphs">1020</text><text x="450.3" y="308.7" font-size="8.6" font-weight="bold" fill="#000" text-anchor="middle" textLength="19.5" lengthAdjust="spacingAndGlyphs">1016</text><text x="385.0" y="349.9" font-size="8.6" font-weight="bold" fill="#000" text-anchor="middle" textLength="19.5" lengthAdjust="spacingAndGlyphs">1018</text><text x="518.2" y="319.1" font-size="8.6" font-weight="bold" fill="#000" text-anchor="middle" textLength="19.5" lengthAdjust="spacingAndGlyphs">1018</text><text x="525.1" y="230.2" font-size="8.6" font-weight="bold" fill="#000" text-anchor="middle" textLength="19.5" lengthAdjust="spacingAndGlyphs">1016</text><text x="591.8" y="199.7" font-size="8.6" font-weight="bold" fill="#000" text-anchor="middle" textLength="19.5" lengthAdjust="spacingAndGlyphs">1012</text><text x="645.0" y="94.0" font-size="8.6" font-weight="bold" fill="#000" text-anchor="middle" textLength="19.5" lengthAdjust="spacingAndGlyphs">1010</text><text x="557.1" y="374.9" font-size="8.6" font-weight="bold" fill="#000" text-anchor="middle" textLength="19.5" lengthAdjust="spacingAndGlyphs">1014</text><text x="575.8" y="416.6" font-size="8.6" font-weight="bold" fill="#000" text-anchor="middle" textLength="19.5" lengthAdjust="spacingAndGlyphs">1012</text>
</g>
<rect x="68.5" y="40" width="585.5" height="444.3" fill="none" stroke="#000" stroke-width="2"/>
<path d="M69.6 484.3 v4M117.4 484.3 v4M165.1 484.3 v4M212.9 484.3 v4M260.6 484.3 v4M308.4 484.3 v4M356.2 484.3 v4M403.9 484.3 v4M451.7 484.3 v4M499.4 484.3 v4M547.2 484.3 v4M595 484.3 v4M642.7 484.3 v4M68.5 40 h-4M68.5 95.5 h-4M68.5 151.1 h-4M68.5 206.6 h-4M68.5 262.1 h-4M68.5 317.7 h-4M68.5 373.2 h-4M68.5 428.8 h-4M68.5 484.3 h-4" stroke="#000" stroke-width="1" fill="none"/>
<text x="69.6" y="497.3" font-size="8.5" text-anchor="middle" fill="#333">2E</text>
<text x="117.4" y="497.3" font-size="8.5" text-anchor="middle" fill="#333">4E</text>
<text x="165.1" y="497.3" font-size="8.5" text-anchor="middle" fill="#333">6E</text>
<text x="212.9" y="497.3" font-size="8.5" text-anchor="middle" fill="#333">8E</text>
<text x="260.6" y="497.3" font-size="8.5" text-anchor="middle" fill="#333">10E</text>
<text x="308.4" y="497.3" font-size="8.5" text-anchor="middle" fill="#333">12E</text>
<text x="356.2" y="497.3" font-size="8.5" text-anchor="middle" fill="#333">14E</text>
<text x="403.9" y="497.3" font-size="8.5" text-anchor="middle" fill="#333">16E</text>
<text x="451.7" y="497.3" font-size="8.5" text-anchor="middle" fill="#333">18E</text>
<text x="499.4" y="497.3" font-size="8.5" text-anchor="middle" fill="#333">20E</text>
<text x="547.2" y="497.3" font-size="8.5" text-anchor="middle" fill="#333">22E</text>
<text x="595" y="497.3" font-size="8.5" text-anchor="middle" fill="#333">24E</text>
<text x="642.7" y="497.3" font-size="8.5" text-anchor="middle" fill="#333">26E</text>
<text x="63.5" y="43.2" font-size="8.5" text-anchor="end" fill="#333">52N</text>
<text x="63.5" y="98.7" font-size="8.5" text-anchor="end" fill="#333">50N</text>
<text x="63.5" y="154.3" font-size="8.5" text-anchor="end" fill="#333">48N</text>
<text x="63.5" y="209.8" font-size="8.5" text-anchor="end" fill="#333">46N</text>
<text x="63.5" y="265.3" font-size="8.5" text-anchor="end" fill="#333">44N</text>
<text x="63.5" y="320.9" font-size="8.5" text-anchor="end" fill="#333">42N</text>
<text x="63.5" y="376.4" font-size="8.5" text-anchor="end" fill="#333">40N</text>
<text x="63.5" y="432" font-size="8.5" text-anchor="end" fill="#333">38N</text>
<text x="63.5" y="487.5" font-size="8.5" text-anchor="end" fill="#333">36N</text>
<path d="M681.5 60.3 L688 47 L694.5 60.3Z" fill="#c4006c" stroke="#555" stroke-width=".6"/>
<rect x="681.5" y="60.3" width="13" height="13.7" fill="#b4003c"/>
<rect x="681.5" y="73.8" width="13" height="13.7" fill="#aa0020"/>
<rect x="681.5" y="87.3" width="13" height="13.7" fill="#b41c22"/>
<rect x="681.5" y="100.8" width="13" height="13.7" fill="#cc3826"/>
<rect x="681.5" y="114.3" width="13" height="13.7" fill="#dc5022"/>
<rect x="681.5" y="127.8" width="13" height="13.7" fill="#e8680c"/>
<rect x="681.5" y="141.3" width="13" height="13.7" fill="#e8820c"/>
<rect x="681.5" y="154.8" width="13" height="13.7" fill="#ff9600"/>
<rect x="681.5" y="168.3" width="13" height="13.7" fill="#ffb000"/>
<rect x="681.5" y="181.8" width="13" height="13.7" fill="#ffc808"/>
<rect x="681.5" y="195.3" width="13" height="13.7" fill="#ffdc10"/>
<rect x="681.5" y="208.8" width="13" height="13.7" fill="#ffff14"/>
<rect x="681.5" y="222.3" width="13" height="13.7" fill="#00e614"/>
<rect x="681.5" y="235.8" width="13" height="13.7" fill="#00dc46"/>
<rect x="681.5" y="249.3" width="13" height="13.7" fill="#00dc6e"/>
<rect x="681.5" y="262.8" width="13" height="13.7" fill="#00dc8c"/>
<rect x="681.5" y="276.3" width="13" height="13.7" fill="#00deb4"/>
<rect x="681.5" y="289.8" width="13" height="13.7" fill="#00e6e6"/>
<rect x="681.5" y="303.3" width="13" height="13.7" fill="#00c8fa"/>
<rect x="681.5" y="316.8" width="13" height="13.7" fill="#00a0ff"/>
<rect x="681.5" y="330.3" width="13" height="13.7" fill="#0070ff"/>
<rect x="681.5" y="343.8" width="13" height="13.7" fill="#0040ff"/>
<rect x="681.5" y="357.3" width="13" height="13.7" fill="#3200fa"/>
<rect x="681.5" y="370.8" width="13" height="13.7" fill="#6600fa"/>
<rect x="681.5" y="384.3" width="13" height="13.7" fill="#9600fa"/>
<rect x="681.5" y="397.8" width="13" height="13.7" fill="#c800fa"/>
<rect x="681.5" y="411.3" width="13" height="13.7" fill="#ff00f0"/>
<rect x="681.5" y="424.8" width="13" height="13.7" fill="#c800b8"/>
<rect x="681.5" y="438.3" width="13" height="13.7" fill="#900090"/>
<rect x="681.5" y="451.8" width="13" height="13.7" fill="#600060"/>
<path d="M681.5 60.3 h13M681.5 73.8 h13M681.5 87.3 h13M681.5 100.8 h13M681.5 114.3 h13M681.5 127.8 h13M681.5 141.3 h13M681.5 154.8 h13M681.5 168.3 h13M681.5 181.8 h13M681.5 195.3 h13M681.5 208.8 h13M681.5 222.3 h13M681.5 235.8 h13M681.5 249.3 h13M681.5 262.8 h13M681.5 276.3 h13M681.5 289.8 h13M681.5 303.3 h13M681.5 316.8 h13M681.5 330.3 h13M681.5 343.8 h13M681.5 357.3 h13M681.5 370.8 h13M681.5 384.3 h13M681.5 397.8 h13M681.5 411.3 h13M681.5 424.8 h13M681.5 438.3 h13M681.5 451.8 h13M681.5 465.3 h13" stroke="#333" stroke-opacity=".7" stroke-width=".8"/>
<path d="M681.5 465.3 L688 479.3 L694.5 465.3Z" fill="#380038" stroke="#555" stroke-width=".6"/>
<rect x="681.5" y="60.3" width="13" height="405" fill="none" stroke="#666" stroke-width=".7"/>
<text x="698.3" y="63.7" font-size="9.3" fill="#333" textLength="19" lengthAdjust="spacingAndGlyphs">600</text>
<text x="698.3" y="77.2" font-size="9.3" fill="#333" textLength="19" lengthAdjust="spacingAndGlyphs">596</text>
<text x="698.3" y="90.7" font-size="9.3" fill="#333" textLength="19" lengthAdjust="spacingAndGlyphs">592</text>
<text x="698.3" y="104.2" font-size="9.3" fill="#333" textLength="19" lengthAdjust="spacingAndGlyphs">588</text>
<text x="698.3" y="117.7" font-size="9.3" fill="#333" textLength="19" lengthAdjust="spacingAndGlyphs">584</text>
<text x="698.3" y="131.2" font-size="9.3" fill="#333" textLength="19" lengthAdjust="spacingAndGlyphs">580</text>
<text x="698.3" y="144.7" font-size="9.3" fill="#333" textLength="19" lengthAdjust="spacingAndGlyphs">576</text>
<text x="698.3" y="158.2" font-size="9.3" fill="#333" textLength="19" lengthAdjust="spacingAndGlyphs">572</text>
<text x="698.3" y="171.7" font-size="9.3" fill="#333" textLength="19" lengthAdjust="spacingAndGlyphs">568</text>
<text x="698.3" y="185.2" font-size="9.3" fill="#333" textLength="19" lengthAdjust="spacingAndGlyphs">564</text>
<text x="698.3" y="198.7" font-size="9.3" fill="#333" textLength="19" lengthAdjust="spacingAndGlyphs">560</text>
<text x="698.3" y="212.2" font-size="9.3" fill="#333" textLength="19" lengthAdjust="spacingAndGlyphs">556</text>
<text x="698.3" y="225.7" font-size="9.3" fill="#333" textLength="19" lengthAdjust="spacingAndGlyphs">552</text>
<text x="698.3" y="239.2" font-size="9.3" fill="#333" textLength="19" lengthAdjust="spacingAndGlyphs">548</text>
<text x="698.3" y="252.7" font-size="9.3" fill="#333" textLength="19" lengthAdjust="spacingAndGlyphs">544</text>
<text x="698.3" y="266.2" font-size="9.3" fill="#333" textLength="19" lengthAdjust="spacingAndGlyphs">540</text>
<text x="698.3" y="279.7" font-size="9.3" fill="#333" textLength="19" lengthAdjust="spacingAndGlyphs">536</text>
<text x="698.3" y="293.2" font-size="9.3" fill="#333" textLength="19" lengthAdjust="spacingAndGlyphs">532</text>
<text x="698.3" y="306.7" font-size="9.3" fill="#333" textLength="19" lengthAdjust="spacingAndGlyphs">528</text>
<text x="698.3" y="320.2" font-size="9.3" fill="#333" textLength="19" lengthAdjust="spacingAndGlyphs">524</text>
<text x="698.3" y="333.7" font-size="9.3" fill="#333" textLength="19" lengthAdjust="spacingAndGlyphs">520</text>
<text x="698.3" y="347.2" font-size="9.3" fill="#333" textLength="19" lengthAdjust="spacingAndGlyphs">516</text>
<text x="698.3" y="360.7" font-size="9.3" fill="#333" textLength="19" lengthAdjust="spacingAndGlyphs">512</text>
<text x="698.3" y="374.2" font-size="9.3" fill="#333" textLength="19" lengthAdjust="spacingAndGlyphs">508</text>
<text x="698.3" y="387.7" font-size="9.3" fill="#333" textLength="19" lengthAdjust="spacingAndGlyphs">504</text>
<text x="698.3" y="401.2" font-size="9.3" fill="#333" textLength="19" lengthAdjust="spacingAndGlyphs">500</text>
<text x="698.3" y="414.7" font-size="9.3" fill="#333" textLength="19" lengthAdjust="spacingAndGlyphs">496</text>
<text x="698.3" y="428.2" font-size="9.3" fill="#333" textLength="19" lengthAdjust="spacingAndGlyphs">492</text>
<text x="698.3" y="441.7" font-size="9.3" fill="#333" textLength="19" lengthAdjust="spacingAndGlyphs">488</text>
<text x="698.3" y="455.2" font-size="9.3" fill="#333" textLength="19" lengthAdjust="spacingAndGlyphs">484</text>
<text x="698.3" y="468.7" font-size="9.3" fill="#333" textLength="19" lengthAdjust="spacingAndGlyphs">480</text>
<text x="696" y="481.8" font-size="8.5" font-weight="bold" fill="#111" textLength="20.5" lengthAdjust="spacingAndGlyphs">dam</text>
<text x="201" y="29.2" font-size="19.8" fill="#000" font-weight="normal" textLength="322.2" lengthAdjust="spacing" >AT 500hPa, MLSP, 300hPa Jet</text>
<text x="13" y="509" font-size="10" fill="#444" font-weight="normal" textLength="147" lengthAdjust="spacing" >CROMETEO WRF 2014.10c</text>
<text x="13" y="520.8" font-size="10.3" fill="#333" font-weight="normal" textLength="113" lengthAdjust="spacing" >www.meteoadriatic.net</text>
<text x="13" y="530.2" font-size="10.3" fill="#333" font-weight="normal" textLength="85.6" lengthAdjust="spacing" >www.crometeo.hr</text>
<text x="198.8" y="511.2" font-size="10.3" fill="#333" font-weight="normal" textLength="113.2" lengthAdjust="spacing" >Barbs are only drawn</text>
<text x="198.8" y="520.8" font-size="10.3" fill="#333" font-weight="normal" textLength="120.2" lengthAdjust="spacing" >where jet speed &gt;50kt</text>
<text x="388.5" y="516.4" font-size="14.8" fill="#111" font-weight="normal" textLength="227.4" lengthAdjust="spacing" >valid: 00Z, Tue, 30DEC2014</text>
<text x="518.6" y="530" font-size="8.8" fill="#111" font-weight="bold" textLength="99.6" lengthAdjust="spacing" >init: 00z, 26.12.2014</text>
<text transform="translate(36 355) rotate(-90)" font-size="22" fill="#000" textLength="198" lengthAdjust="spacing">WRF−NMM 12km</text>
<text transform="translate(21 134.5) rotate(-90)" font-size="11" fill="#666" textLength="72.5" lengthAdjust="spacing">run: 00z</text>
<text transform="translate(39.5 134.5) rotate(-90)" font-size="11" fill="#666" textLength="86.5" lengthAdjust="spacing">step: +96h</text>
</svg>
<svg class="a" style="left:30.300px;top:827.300px" width="720" height="86" viewBox="0 0 720 86" font-family="Liberation Sans,sans-serif"><defs><filter id="bl" x="-10%" y="-10%" width="120%" height="120%"><feGaussianBlur stdDeviation="2.200"/></filter></defs><rect width="720" height="86" fill="#6ac8e2"/><g filter="url(#bl)"><path d="M366 0 L720 0 L720 86 L340 86 L339 44 L345 30 L354 32 L358 18 L352 8 Z" fill="#4aa288"/><path d="M392 12 L402 8 L408 14 L418 12 L424 22 L414 30 L400 34 L392 30 L398 22Z" fill="#6ac8e2"/><path d="M382 70 L392 66 L400 74 L398 86 L384 86Z" fill="#6ac8e2"/><path d="M590 78 L604 64 L622 62 L640 70 L660 86 L596 86Z" fill="#6ac8e2"/><path d="M640 10 L672 2 L720 0 L720 70 L700 60 L690 40 L668 48 L654 62 L640 56 L652 34 L642 24Z" fill="#c8c07a"/><path d="M268 0 L290 2 L288 22 L276 30 L268 20Z" fill="#58a87c"/><path d="M0 50 L20 48 L40 56 L60 50 L86 52 L90 66 L84 86 L0 86Z" fill="#56a884"/><path d="M104 50 L130 46 L205 48 L214 58 L222 86 L120 86 L128 74 L112 66Z" fill="#c8c07a"/><path d="M104 50 L128 48 L134 60 L120 70 L126 86 L112 86 L108 70Z" fill="#6aae7c"/><path d="M205 48 L214 54 L222 70 L226 86 L214 86 L210 66Z" fill="#6aae7c"/><path d="M440 60 L470 52 L500 60 L480 78 L450 76Z" fill="#62aa86" opacity=".7"/></g><g fill="none" stroke="#34484e" stroke-width="1" stroke-opacity=".85"><path d="M0 62 Q30 70 50 50 M10 86 Q40 60 70 50 Q100 40 96 86 M120 86 Q110 60 135 60 Q160 64 150 86 M140 50 Q190 50 200 86 M224 48 Q220 70 232 86 M250 0 Q262 30 250 48 Q230 64 215 48 Q208 28 222 10 M278 0 Q300 30 330 40 Q350 50 372 86 M300 0 Q330 20 360 50 M330 20 Q360 16 350 30 Q334 40 328 28Z M400 30 Q440 50 470 30 Q490 10 480 0 M480 8 Q470 40 488 56 Q510 66 540 44 Q566 20 570 0 M420 86 Q430 60 450 58 Q470 62 476 86 M520 86 Q540 50 580 30 Q620 20 640 0 M536 86 Q560 50 600 42 Q640 44 650 20 M556 86 Q570 64 600 56 Q620 56 628 72 Q630 80 624 86 M572 86 Q584 72 600 70 Q612 74 610 86 M640 50 Q660 70 690 60 Q710 40 720 20 M660 86 Q690 70 700 40 M706 86 Q716 70 720 60"/><path d="M472 2 L712 42 M360 40 L470 86 M626 0 L610 86" stroke-width=".8" stroke-opacity=".6"/></g><g fill="none" stroke="#d8604a" stroke-width="1" stroke-dasharray="7 4"><path d="M128 78 Q170 74 205 78 Q215 80 220 86 M504 0 Q490 40 460 70 L450 86 M568 4 Q560 40 556 86 M640 2 Q650 30 636 50 Q626 64 628 86 M660 30 Q680 20 700 36 Q716 50 708 86 M210 50 Q222 52 230 48"/></g><text transform="translate(122 86) rotate(-32)" font-size="8" font-weight="bold" fill="#e02818">510</text><g fill="none" stroke="#ff3c14" stroke-width="1.800"><path d="M577 4 Q570 24 560 42 Q552 60 558 86"/><path d="M618 6 Q606 24 586 34 Q570 44 568 86"/></g><g fill="#ff3c14"><path d="M570 14 a5 5 0 0 0 3 9z"/><path d="M558 38 a5.500 5.500 0 0 0 3.500 9.500z"/><path d="M553 64 a5 5 0 0 0 2 10z"/><path d="M607 17 a5 5 0 0 0 8 6z"/><path d="M584 30 a5.500 5.500 0 0 0 9 6z"/><path d="M570 50 a5 5 0 0 0 3 10z"/><path d="M566 76 a5 5 0 0 0 1 10z"/></g><path d="M586 86 Q604 80 622 86" fill="none" stroke="#0a28f0" stroke-width="2"/><path d="M588 74 L594 86 L584 86Z M622 74 L616 86 L626 86Z" fill="#0a28f0"/><text transform="translate(548 78) rotate(-62)" font-size="10.500" fill="#111">1012</text><text transform="translate(528 92) rotate(-62)" font-size="10.500" fill="#111">1016</text><g font-size="9.500" fill="#a0909c" fill-opacity=".75"><text x="296" y="10">75</text><text x="458" y="13">45</text><text x="622" y="13">45</text><text transform="translate(708 38) rotate(90)">45</text></g><g fill="#fff" text-anchor="middle"><text x="311.500" y="24.700" font-size="15">H</text><text x="311.500" y="43.400" font-size="16.500" textLength="37" lengthAdjust="spacingAndGlyphs">1023</text><text x="384.500" y="32.700" font-size="15">L</text><text x="384.500" y="51.500" font-size="16.500" textLength="37" lengthAdjust="spacingAndGlyphs">1011</text><text x="679.300" y="61.100" font-size="15">H</text><text x="679.300" y="80.400" font-size="16.500" textLength="37" lengthAdjust="spacingAndGlyphs">1021</text><text x="216" y="91" font-size="15">L</text></g><g stroke="#fff" stroke-width="1.100"><path d="M290.500 12l5 5m0-5l-5 5M359 28l5 5m0-5l-5 5M332.500 82l5 5m0-5l-5 5M701 57l5 5m0-5l-5 5"/></g><path d="M356 30 q-2-8 6-7 q7 1 5 8 q-3 7-9 4z" fill="none" stroke="#34484e" stroke-width=".9"/><rect x="51" y=".700" width="215" height="47.600" fill="#fff" stroke="#000" stroke-width="1.200"/><rect x="0" y="0" width="51.300" height="48.800" fill="#000"/><g fill="#c8f028"><path d="M5.500 14 Q14 8 22 12 T40 9.500 L46 9 L46 13 Q38 17 30 15 T12 18 L5.500 18Z"/><path d="M5.500 22 Q14 16 22 20 T40 17.500 L46 17 L46 21 Q38 25 30 23 T12 26 L5.500 26Z"/><path d="M5.500 30 Q14 24 22 28 T40 25.500 L46 25 L46 29 Q38 33 30 31 T12 34 L5.500 34Z"/></g><text x="25.700" y="43.600" font-size="8.200" font-weight="bold" fill="#fff" text-anchor="middle" textLength="40.500" lengthAdjust="spacingAndGlyphs">Met Office</text><text x="52.200" y="21.600" font-size="12.300" fill="#111" textLength="113" lengthAdjust="spacingAndGlyphs">Forecast chart (T+48)</text><text x="52.200" y="34.800" font-size="12.300" fill="#111" textLength="178" lengthAdjust="spacingAndGlyphs">Valid 0000 UTC Sun 28 DEC 2014</text><rect x=".600" y=".600" width="718.800" height="90" fill="none" stroke="#000" stroke-width="1.300"/></svg>
</div>
<div class="a" style="left:1380px;top:0;width:2px;height:912px;background:#e6e6e6"></div>
<div id="rside">
<div class="a" style="left:30px;top:49px;width:230px;height:10px;background:#fff"></div>
<div class="a" style="left:108.5px;top:49px;width:43px;height:9.5px;background:#d8d8d8"></div>
<div class="a" style="left:157.5px;top:49px;width:39px;height:9.5px;background:linear-gradient(90deg,#f06010,#f8a020 30%,#f0e020 45%,#30a060 55%,#e8e020 70%,#f09020)"></div>
<div class="a" style="left:206px;top:49px;width:29px;height:8px;background:#1c1a18"></div>
<div class="a" style="left:30px;top:58.4px;width:230px;height:7.6px;background:#000"></div>
<div class="a" style="left:30px;top:73.3px;width:230px;height:132.5px;overflow:hidden;background:radial-gradient(ellipse 150px 90px at 150px 50px,#7090ee 0%,#5a78dc 45%,#4660c4 100%)"><div class="a" style="left:0;top:80px;width:230px;height:53px;background:linear-gradient(180deg,rgba(50,60,170,0),rgba(50,60,170,.7))"></div><svg class="a" style="left:0;top:0" width="230" height="133" viewBox="0 0 230 133"><defs><filter id="gl" x="-50%" y="-10%" width="200%" height="120%"><feGaussianBlur stdDeviation="3.500"/></filter></defs><path d="M150 28 L154 33 L156 38 L160 43 L161 47 L165 52 L166 57 L169 62 L168.500 67 L171 73 L170 79 L172 86 L170.500 92 L171.500 98 L170 104 L173 110 L174 117 L176.500 123 L177 128 L179 133" fill="none" stroke="#b8ccff" stroke-width="9" stroke-opacity=".55" filter="url(#gl)"/><path d="M150 28 L154 33 L156 38 L160 43 L161 47 L165 52 L166 57 L169 62 L168.500 67 L171 73 L170 79 L172 86 L170.500 92 L171.500 98 L170 104 L173 110 L174 117 L176.500 123 L177 128 L179 133" fill="none" stroke="#dfe8ff" stroke-width="3.400" stroke-opacity=".6" stroke-linejoin="round"/><path d="M150 28 L154 33 L156 38 L160 43 L161 47 L165 52 L166 57 L169 62 L168.500 67 L171 73 L170 79 L172 86 L170.500 92 L171.500 98 L170 104 L173 110 L174 117 L176.500 123 L177 128 L179 133" fill="none" stroke="#fff" stroke-width="1.800" stroke-linejoin="round"/><path d="M0 125 L58 129 L58 133 L0 133Z" fill="#2a2840"/><ellipse cx="210" cy="100" rx="30" ry="14" fill="#4658b4" opacity=".5"/></svg><div class="a" style="left:0;top:0;width:230px;height:29.5px;background:rgba(18,22,52,.93)"></div><span class="t" style="left:12.4px;top:7.9px;font-size:13.8px;letter-spacing:-0.378px;color:#f2f2f2;">Lightning in Belgrade (30. 7. 20...</span><svg class="a" style="left:217px;top:8px" width="14" height="16" viewBox="0 0 14 16"><g fill="#eee"><circle cx="4" cy="8" r="2.6"/><circle cx="12.5" cy="2.8" r="2.6"/><circle cx="12.5" cy="13.2" r="2.6"/></g><path d="M4 8 L12.5 2.8 M4 8 L12.5 13.2" stroke="#eee" stroke-width="1.6"/></svg><svg class="a" style="left:98px;top:51.7px" width="42" height="29.5" viewBox="0 0 42 29.5"><rect width="42" height="29.5" rx="6" fill="#272a36"/><path d="M16.7 9 L28.2 14.8 L16.7 20.6Z" fill="#fff"/></svg></div>
<div class="a" style="left:30px;top:212.9px;width:230px;height:132.6px;overflow:hidden;background:#211d17"><svg class="a" style="left:0;top:29.5px" width="230" height="26" viewBox="0 0 230 26"><rect width="230" height="26" fill="#2a2a1c"/><path d="M4 26 L12.6 26 L16 0 L7.5 0Z" fill="#7a8048" opacity="0.75"/><path d="M19.7 26 L28.3 26 L31.7 0 L23.2 0Z" fill="#7a8048" opacity="0.75"/><path d="M35.4 26 L44 26 L47.4 0 L38.9 0Z" fill="#7a8048" opacity="0.75"/><path d="M51.1 26 L59.7 26 L63.1 0 L54.6 0Z" fill="#7a8048" opacity="0.75"/><path d="M66.8 26 L75.4 26 L78.8 0 L70.3 0Z" fill="#7a8048" opacity="0.75"/><path d="M82.5 26 L91.1 26 L94.5 0 L86 0Z" fill="#7a8048" opacity="0.75"/><path d="M98.2 26 L106.8 26 L110.2 0 L101.7 0Z" fill="#7a8048" opacity="0.75"/><path d="M113.9 26 L122.5 26 L125.9 0 L117.4 0Z" fill="#7a8048" opacity="0.35"/><path d="M129.6 26 L138.2 26 L141.6 0 L133.1 0Z" fill="#7a8048" opacity="0.35"/><path d="M145.3 26 L153.9 26 L157.3 0 L148.8 0Z" fill="#7a8048" opacity="0.35"/><path d="M161 26 L169.6 26 L173 0 L164.5 0Z" fill="#7a8048" opacity="0.35"/><rect y="23" width="230" height="3" fill="#3a3a2a" opacity=".6"/></svg><div class="a" style="left:163px;top:55px;width:1.5px;height:78px;background:#3a352c"></div><div class="a" style="left:0;top:0;width:230px;height:29.9px;background:linear-gradient(180deg,#1a170e,#15130c 80%%,#4a4010)"></div><span class="t" style="left:12.4px;top:8.2px;font-size:13.8px;letter-spacing:-0.433px;color:#f2f2f2;">Udar munje - Beograd (30. 7. 20...</span><svg class="a" style="left:217px;top:8px" width="14" height="16" viewBox="0 0 14 16"><g fill="#eee"><circle cx="4" cy="8" r="2.6"/><circle cx="12.5" cy="2.8" r="2.6"/><circle cx="12.5" cy="13.2" r="2.6"/></g><path d="M4 8 L12.5 2.8 M4 8 L12.5 13.2" stroke="#eee" stroke-width="1.6"/></svg><svg class="a" style="left:98px;top:52.7px" width="42" height="29.5" viewBox="0 0 42 29.5"><rect width="42" height="29.5" rx="6" fill="#232323"/><path d="M16.7 9 L28.2 14.8 L16.7 20.6Z" fill="#fff"/></svg></div>
<div class="a" style="left:30px;top:403px;width:160px;height:520px;background:#fff4a4;border:1px solid #111;border-bottom:0;overflow:hidden"><div class="a" style="left:6px;top:0;width:146px;height:520px;background:#fff9c4"></div><div class="a" style="left:19.5px;top:11px;width:120.5px;height:85px;border-radius:5px;background:repeating-linear-gradient(55deg,rgba(255,255,255,0) 0 5px,rgba(255,255,255,.13) 5px 6.5px),linear-gradient(180deg,#5a74e4,#4356c8);box-shadow:0 2px 2px rgba(120,90,0,.45),inset 0 -3px 3px rgba(0,0,0,.18),inset 0 2px 2px rgba(255,255,255,.25)"></div><div class="a" style="left:64.5px;top:15.3px;width:30px;height:30px;border-radius:50%;background:radial-gradient(circle at 45% 35%,#ffe860,#ffc020 60%,#f09800);box-shadow:0 1px 2px rgba(0,0,0,.4)"></div><span class="t" style="left:64.5px;width:30px;text-align:center;top:19.6px;font-size:22px;font-weight:bold;color:#2a0c10">1</span><div class="a" style="left:19.5px;top:107.5px;width:120.5px;height:84.5px;border-radius:5px;background:repeating-linear-gradient(55deg,rgba(255,255,255,0) 0 5px,rgba(255,255,255,.13) 5px 6.5px),linear-gradient(180deg,#e050ea,#c038cc);box-shadow:0 2px 2px rgba(120,90,0,.45),inset 0 -3px 3px rgba(0,0,0,.18),inset 0 2px 2px rgba(255,255,255,.25)"></div><div class="a" style="left:64.5px;top:111.8px;width:30px;height:30px;border-radius:50%;background:radial-gradient(circle at 45% 35%,#ffe860,#ffc020 60%,#f09800);box-shadow:0 1px 2px rgba(0,0,0,.4)"></div><span class="t" style="left:64.5px;width:30px;text-align:center;top:116.1px;font-size:22px;font-weight:bold;color:#2a0c10">2</span><div class="a" style="left:19.5px;top:202.5px;width:120.5px;height:85px;border-radius:5px;background:repeating-linear-gradient(55deg,rgba(255,255,255,0) 0 5px,rgba(255,255,255,.13) 5px 6.5px),linear-gradient(180deg,#2cb0f8,#1890dc);box-shadow:0 2px 2px rgba(120,90,0,.45),inset 0 -3px 3px rgba(0,0,0,.18),inset 0 2px 2px rgba(255,255,255,.25)"></div><div class="a" style="left:64.5px;top:206.8px;width:30px;height:30px;border-radius:50%;background:radial-gradient(circle at 45% 35%,#ffe860,#ffc020 60%,#f09800);box-shadow:0 1px 2px rgba(0,0,0,.4)"></div><span class="t" style="left:64.5px;width:30px;text-align:center;top:211.1px;font-size:22px;font-weight:bold;color:#2a0c10">3</span><div class="a" style="left:19.5px;top:300px;width:120.5px;height:85.5px;border-radius:5px;background:repeating-linear-gradient(55deg,rgba(255,255,255,0) 0 5px,rgba(255,255,255,.13) 5px 6.5px),linear-gradient(180deg,#fba024,#e8800c);box-shadow:0 2px 2px rgba(120,90,0,.45),inset 0 -3px 3px rgba(0,0,0,.18),inset 0 2px 2px rgba(255,255,255,.25)"></div><div class="a" style="left:64.5px;top:304.3px;width:30px;height:30px;border-radius:50%;background:radial-gradient(circle at 45% 35%,#ffe860,#ffc020 60%,#f09800);box-shadow:0 1px 2px rgba(0,0,0,.4)"></div><span class="t" style="left:64.5px;width:30px;text-align:center;top:308.6px;font-size:22px;font-weight:bold;color:#2a0c10">4</span><div class="a" style="left:19.5px;top:396.5px;width:120.5px;height:84.5px;border-radius:5px;background:repeating-linear-gradient(55deg,rgba(255,255,255,0) 0 5px,rgba(255,255,255,.13) 5px 6.5px),linear-gradient(180deg,#62c04e,#44a034);box-shadow:0 2px 2px rgba(120,90,0,.45),inset 0 -3px 3px rgba(0,0,0,.18),inset 0 2px 2px rgba(255,255,255,.25)"></div><div class="a" style="left:64.5px;top:400.8px;width:30px;height:30px;border-radius:50%;background:radial-gradient(circle at 45% 35%,#ffe860,#ffc020 60%,#f09800);box-shadow:0 1px 2px rgba(0,0,0,.4)"></div><span class="t" style="left:64.5px;width:30px;text-align:center;top:405.1px;font-size:22px;font-weight:bold;color:#2a0c10">5</span><span class="t" style="left:57.5px;top:50.7px;font-size:16.5px;transform:scaleX(1.2622);color:#fff;font-weight:bold;text-shadow:1px 1.5px 1px rgba(0,0,0,.55);">Free</span>
<span class="t" style="left:22px;top:71.4px;font-size:12px;transform:scaleX(1.2681);color:#fff;font-weight:bold;text-shadow:1px 1.5px 1px rgba(0,0,0,.55);">Homework Help</span>
<span class="t" style="left:47.4px;top:152.7px;font-size:25.5px;transform:scaleX(1.1580);color:#fff;font-weight:bold;text-shadow:1px 1.5px 1px rgba(0,0,0,.55);">Math</span>
<span class="t" style="left:37px;top:250.9px;font-size:22px;transform:scaleX(1.1202);color:#fff;font-weight:bold;text-shadow:1px 1.5px 1px rgba(0,0,0,.55);">English</span>
<span class="t" style="left:29px;top:348.4px;font-size:22px;transform:scaleX(1.1903);color:#fff;font-weight:bold;text-shadow:1px 1.5px 1px rgba(0,0,0,.55);">Science</span>
<span class="t" style="left:31px;top:443.4px;font-size:22px;transform:scaleX(1.2797);color:#fff;font-weight:bold;text-shadow:1px 1.5px 1px rgba(0,0,0,.55);">History</span><div class="a" style="left:16px;top:491px;width:128px;height:40px;border-radius:14px;background:linear-gradient(180deg,#fff080,#ffd838);border:3px solid #f09a3a"></div><div class="a" style="right:-1px;top:-1px;width:31px;height:15px;background:#d8d8d8"></div><div class="a" style="right:14.5px;top:-1px;width:1px;height:15px;background:#f4f4f4"></div><svg class="a" style="right:-1px;top:-1px" width="31" height="15" viewBox="0 0 31 15"><circle cx="7.5" cy="7.5" r="4.8" fill="none" stroke="#18b4d4" stroke-width="1.2"/><path d="M7.5 6.6v3.6M7.5 4.4v1.1" stroke="#18b4d4" stroke-width="1.4"/><path d="M19.5 3.5l8 8M27.5 3.5l-8 8" stroke="#18b4d4" stroke-width="1.3"/></svg></div>
</div>
<div id="nav">
<span class="t" style="left:273.2px;top:17.3px;font-size:16px;letter-spacing:-0.600px;color:#c4c5c6;">Vremenska prognoza</span>
<span class="t" style="left:443.3px;top:17.3px;font-size:16px;letter-spacing:-0.464px;color:#fff;">Meteo blog</span>
<span class="t" style="left:546.8px;top:17.3px;font-size:16px;letter-spacing:-0.514px;color:#c4c5c6;">Meteopedia</span>
<span class="t" style="left:654px;top:17.3px;font-size:16px;letter-spacing:-0.634px;color:#c4c5c6;">Forum</span>
<span class="t" style="left:726px;top:17.3px;font-size:16px;letter-spacing:-0.695px;color:#c4c5c6;">Radarska slika</span>
<span class="t" style="left:850.2px;top:17.3px;font-size:16px;letter-spacing:-0.335px;color:#c4c5c6;">Trenutne temperature</span>
<span class="t" style="left:1026.7px;top:17.3px;font-size:16px;letter-spacing:-0.723px;color:#c4c5c6;">Web kamere</span>
<div class="a" style="left:1580px;top:0;width:1px;height:49px;background:#484b51"></div>
<svg class="a" style="left:1598px;top:12px" width="24" height="24" viewBox="0 0 24 24"><circle cx="11" cy="10.8" r="6.3" fill="none" stroke="#fff" stroke-width="3"/><path d="M15.6 15.6 L20.6 20.4" stroke="#fff" stroke-width="3.2" stroke-linecap="round"/></svg>
</div>
</div>
<div class="a" style="left:0;top:0;width:1920px;height:26px;background:linear-gradient(90deg,#4a78b4 0,#3f6cab 300px,#315f9f 900px,#2a5896 1400px,#1f4c8a 1700px,#1c4784 1920px)"></div>
<div class="a" style="left:0;top:0;width:1920px;height:26px;background:linear-gradient(180deg,rgba(255,255,255,.10),rgba(255,255,255,0) 60%)"></div>
<svg class="a" style="left:1.3px;top:0;z-index:5" width="147" height="26" viewBox="0 0 147 26"><defs><linearGradient id="tg0" x1="0" y1="0" x2="0" y2="1"><stop offset="0" stop-color="#c3d0e2"/><stop offset="1" stop-color="#b1c1d7"/></linearGradient></defs><path d="M0 25.500 C3 25.500 4.300 23.500 5.300 20.500 L9.800 6 C10.700 3 11.800 1.500 14.500 1.500 L131.200 1.500 C133.900 1.500 135 3 135.900 6 L140.400 20.500 C141.400 23.500 142.700 25.500 145.700 25.500 Z" fill="url(#tg0)" stroke="#7f92ae" stroke-width="1"/></svg>
<div class="a" style="z-index:21;left:0;top:0"><svg class="a" style="left:16.9px;top:5px" width="16" height="16" viewBox="0 0 16 16"><rect width="16" height="16" fill="#dfe6ee"/><circle cx="8" cy="8" r="6.6" fill="#eef2f6" stroke="#c2ccd8"/><circle cx="5.6" cy="6.5" r=".8" fill="#b4c0cc"/><circle cx="10.2" cy="6.5" r=".8" fill="#b4c0cc"/><path d="M4.8 9.6q3.2 3 6.2 0" fill="none" stroke="#b4c0cc" stroke-width=".9"/></svg></div>
<div class="a" style="z-index:23;left:102.3px;top:4px;width:22px;height:18px;background:linear-gradient(90deg,rgba(183,198,219,0),#b9c8dc 75%)"></div>
<svg class="a" style="z-index:24;left:123.9px;top:9.800px" width="8" height="8" viewBox="0 0 8 8"><path d="M1 1l5.600 5.600M6.600 1l-5.600 5.600" stroke="#444852" stroke-width="1.600"/></svg>
<svg class="a" style="left:136.2px;top:0;z-index:5" width="147" height="26" viewBox="0 0 147 26"><defs><linearGradient id="tg1" x1="0" y1="0" x2="0" y2="1"><stop offset="0" stop-color="#c3d0e2"/><stop offset="1" stop-color="#b1c1d7"/></linearGradient></defs><path d="M0 25.500 C3 25.500 4.300 23.500 5.300 20.500 L9.800 6 C10.700 3 11.800 1.500 14.500 1.500 L131.200 1.500 C133.900 1.500 135 3 135.900 6 L140.400 20.500 C141.400 23.500 142.700 25.500 145.700 25.500 Z" fill="url(#tg1)" stroke="#7f92ae" stroke-width="1"/></svg>
<div class="a" style="z-index:21;left:0;top:0"><svg class="a" style="left:151.8px;top:5px" width="16" height="16" viewBox="0 0 16 16"><rect width="16" height="16" fill="#dfe6ee"/><circle cx="8" cy="8" r="6.6" fill="#eef2f6" stroke="#c2ccd8"/><circle cx="5.6" cy="6.5" r=".8" fill="#b4c0cc"/><circle cx="10.2" cy="6.5" r=".8" fill="#b4c0cc"/><path d="M4.8 9.6q3.2 3 6.2 0" fill="none" stroke="#b4c0cc" stroke-width=".9"/></svg></div>
<div class="a" style="z-index:23;left:237.2px;top:4px;width:22px;height:18px;background:linear-gradient(90deg,rgba(183,198,219,0),#b9c8dc 75%)"></div>
<svg class="a" style="z-index:24;left:258.9px;top:9.800px" width="8" height="8" viewBox="0 0 8 8"><path d="M1 1l5.600 5.600M6.600 1l-5.600 5.600" stroke="#444852" stroke-width="1.600"/></svg>
<svg class="a" style="left:271.2px;top:0;z-index:5" width="147" height="26" viewBox="0 0 147 26"><defs><linearGradient id="tg2" x1="0" y1="0" x2="0" y2="1"><stop offset="0" stop-color="#c3d0e2"/><stop offset="1" stop-color="#b1c1d7"/></linearGradient></defs><path d="M0 25.500 C3 25.500 4.300 23.500 5.300 20.500 L9.800 6 C10.700 3 11.800 1.500 14.500 1.500 L131.200 1.500 C133.900 1.500 135 3 135.900 6 L140.400 20.500 C141.400 23.500 142.700 25.500 145.700 25.500 Z" fill="url(#tg2)" stroke="#7f92ae" stroke-width="1"/></svg>
<div class="a" style="z-index:21;left:0;top:0"><svg class="a" style="left:286.8px;top:5px" width="16" height="16" viewBox="0 0 16 16"><rect width="16" height="16" fill="#e8edf3"/><path d="M4.5 5h7l-7 7h7M6 8.3l4-1.2M8.5 2.5l1 1.2" fill="none" stroke="#222" stroke-width="1.5"/></svg></div>
<div class="a" style="z-index:23;left:372.2px;top:4px;width:22px;height:18px;background:linear-gradient(90deg,rgba(183,198,219,0),#b9c8dc 75%)"></div>
<svg class="a" style="z-index:24;left:393.8px;top:9.800px" width="8" height="8" viewBox="0 0 8 8"><path d="M1 1l5.600 5.600M6.600 1l-5.600 5.600" stroke="#444852" stroke-width="1.600"/></svg>
<svg class="a" style="left:406.1px;top:0;z-index:5" width="147" height="26" viewBox="0 0 147 26"><defs><linearGradient id="tg3" x1="0" y1="0" x2="0" y2="1"><stop offset="0" stop-color="#c3d0e2"/><stop offset="1" stop-color="#b1c1d7"/></linearGradient></defs><path d="M0 25.500 C3 25.500 4.300 23.500 5.300 20.500 L9.800 6 C10.700 3 11.800 1.500 14.500 1.500 L131.200 1.500 C133.900 1.500 135 3 135.900 6 L140.400 20.500 C141.400 23.500 142.700 25.500 145.700 25.500 Z" fill="url(#tg3)" stroke="#7f92ae" stroke-width="1"/></svg>
<div class="a" style="z-index:21;left:0;top:0"><svg class="a" style="left:421.8px;top:5px" width="17" height="16" viewBox="0 0 17 16"><rect x=".5" y="2" width="16" height="12" rx="3.5" fill="#c0262c"/><path d="M6.7 5l4.8 3-4.8 3z" fill="#fff"/></svg></div>
<div class="a" style="z-index:23;left:507.1px;top:4px;width:22px;height:18px;background:linear-gradient(90deg,rgba(183,198,219,0),#b9c8dc 75%)"></div>
<svg class="a" style="z-index:24;left:528.8px;top:9.800px" width="8" height="8" viewBox="0 0 8 8"><path d="M1 1l5.600 5.600M6.600 1l-5.600 5.600" stroke="#444852" stroke-width="1.600"/></svg>
<svg class="a" style="left:541.1px;top:0;z-index:5" width="147" height="26" viewBox="0 0 147 26"><defs><linearGradient id="tg4" x1="0" y1="0" x2="0" y2="1"><stop offset="0" stop-color="#c3d0e2"/><stop offset="1" stop-color="#b1c1d7"/></linearGradient></defs><path d="M0 25.500 C3 25.500 4.300 23.500 5.300 20.500 L9.800 6 C10.700 3 11.800 1.500 14.500 1.500 L131.200 1.500 C133.900 1.500 135 3 135.900 6 L140.400 20.500 C141.400 23.500 142.700 25.500 145.700 25.500 Z" fill="url(#tg4)" stroke="#7f92ae" stroke-width="1"/></svg>
<div class="a" style="z-index:21;left:0;top:0"><svg class="a" style="left:556.7px;top:5px" width="16" height="16" viewBox="0 0 16 16"><rect width="16" height="16" rx="1.5" fill="#4a86ee"/><text x="8" y="12.4" font-size="12.5" font-weight="bold" fill="#fff" text-anchor="middle" font-family="Liberation Sans,sans-serif">g</text></svg></div>
<div class="a" style="z-index:23;left:642.1px;top:4px;width:22px;height:18px;background:linear-gradient(90deg,rgba(183,198,219,0),#b9c8dc 75%)"></div>
<svg class="a" style="z-index:24;left:663.7px;top:9.800px" width="8" height="8" viewBox="0 0 8 8"><path d="M1 1l5.600 5.600M6.600 1l-5.600 5.600" stroke="#444852" stroke-width="1.600"/></svg>
<svg class="a" style="left:676px;top:0;z-index:5" width="147" height="26" viewBox="0 0 147 26"><defs><linearGradient id="tg5" x1="0" y1="0" x2="0" y2="1"><stop offset="0" stop-color="#c3d0e2"/><stop offset="1" stop-color="#b1c1d7"/></linearGradient></defs><path d="M0 25.500 C3 25.500 4.300 23.500 5.300 20.500 L9.800 6 C10.700 3 11.800 1.500 14.500 1.500 L131.200 1.500 C133.900 1.500 135 3 135.900 6 L140.400 20.500 C141.400 23.500 142.700 25.500 145.700 25.500 Z" fill="url(#tg5)" stroke="#7f92ae" stroke-width="1"/></svg>
<div class="a" style="z-index:21;left:0;top:0"><svg class="a" style="left:691.6px;top:5px" width="17" height="16" viewBox="0 0 17 16"><path d="M1 12.5 Q1 4 8.5 4 L8.5 6.5 Q4 6.5 4 12.5Z" fill="#0a8a78"/><path d="M9 12.5 L12.5 4 L16 12.5 M10.3 10h4.4" fill="none" stroke="#0a8a78" stroke-width="1.8"/><path d="M1 14h15" stroke="#d01830" stroke-width="1.4"/></svg></div>
<div class="a" style="z-index:23;left:777px;top:4px;width:22px;height:18px;background:linear-gradient(90deg,rgba(183,198,219,0),#b9c8dc 75%)"></div>
<svg class="a" style="z-index:24;left:798.6px;top:9.800px" width="8" height="8" viewBox="0 0 8 8"><path d="M1 1l5.600 5.600M6.600 1l-5.600 5.600" stroke="#444852" stroke-width="1.600"/></svg>
<svg class="a" style="left:811px;top:0;z-index:5" width="147" height="26" viewBox="0 0 147 26"><defs><linearGradient id="tg6" x1="0" y1="0" x2="0" y2="1"><stop offset="0" stop-color="#c3d0e2"/><stop offset="1" stop-color="#b1c1d7"/></linearGradient></defs><path d="M0 25.500 C3 25.500 4.300 23.500 5.300 20.500 L9.800 6 C10.700 3 11.800 1.500 14.500 1.500 L131.200 1.500 C133.900 1.500 135 3 135.900 6 L140.400 20.500 C141.400 23.500 142.700 25.500 145.700 25.500 Z" fill="url(#tg6)" stroke="#7f92ae" stroke-width="1"/></svg>
<div class="a" style="z-index:21;left:0;top:0"><svg class="a" style="left:826.6px;top:5px" width="16" height="16" viewBox="0 0 16 16"><rect width="16" height="16" fill="#dfe6ee"/><circle cx="8" cy="8" r="6.6" fill="#eef2f6" stroke="#c2ccd8"/><circle cx="5.6" cy="6.5" r=".8" fill="#b4c0cc"/><circle cx="10.2" cy="6.5" r=".8" fill="#b4c0cc"/><path d="M4.8 9.6q3.2 3 6.2 0" fill="none" stroke="#b4c0cc" stroke-width=".9"/></svg></div>
<div class="a" style="z-index:23;left:912px;top:4px;width:22px;height:18px;background:linear-gradient(90deg,rgba(183,198,219,0),#b9c8dc 75%)"></div>
<svg class="a" style="z-index:24;left:933.6px;top:9.800px" width="8" height="8" viewBox="0 0 8 8"><path d="M1 1l5.600 5.600M6.600 1l-5.600 5.600" stroke="#444852" stroke-width="1.600"/></svg>
<svg class="a" style="left:945.9px;top:0;z-index:5" width="147" height="26" viewBox="0 0 147 26"><defs><linearGradient id="tg7" x1="0" y1="0" x2="0" y2="1"><stop offset="0" stop-color="#c3d0e2"/><stop offset="1" stop-color="#b1c1d7"/></linearGradient></defs><path d="M0 25.500 C3 25.500 4.300 23.500 5.300 20.500 L9.800 6 C10.700 3 11.800 1.500 14.500 1.500 L131.200 1.500 C133.900 1.500 135 3 135.900 6 L140.400 20.500 C141.400 23.500 142.700 25.500 145.700 25.500 Z" fill="url(#tg7)" stroke="#7f92ae" stroke-width="1"/></svg>
<div class="a" style="z-index:21;left:0;top:0"><svg class="a" style="left:961.5px;top:5px" width="16" height="16" viewBox="0 0 16 16"><rect width="16" height="16" rx="1" fill="#e8e0d4"/><path d="M0 13 L5.5 6 L9 9.5 L16 2 V6.5 L9 14 L5.5 10.5 L0 16Z" fill="#f07a18"/></svg></div>
<div class="a" style="z-index:23;left:1046.9px;top:4px;width:22px;height:18px;background:linear-gradient(90deg,rgba(183,198,219,0),#b9c8dc 75%)"></div>
<svg class="a" style="z-index:24;left:1068.5px;top:9.800px" width="8" height="8" viewBox="0 0 8 8"><path d="M1 1l5.600 5.600M6.600 1l-5.600 5.600" stroke="#444852" stroke-width="1.600"/></svg>
<svg class="a" style="left:1080.9px;top:0;z-index:5" width="147" height="26" viewBox="0 0 147 26"><defs><linearGradient id="tg8" x1="0" y1="0" x2="0" y2="1"><stop offset="0" stop-color="#c3d0e2"/><stop offset="1" stop-color="#b1c1d7"/></linearGradient></defs><path d="M0 25.500 C3 25.500 4.300 23.500 5.300 20.500 L9.800 6 C10.700 3 11.800 1.500 14.500 1.500 L131.200 1.500 C133.900 1.500 135 3 135.900 6 L140.400 20.500 C141.400 23.500 142.700 25.500 145.700 25.500 Z" fill="url(#tg8)" stroke="#7f92ae" stroke-width="1"/></svg>
<div class="a" style="z-index:21;left:0;top:0"><svg class="a" style="left:1096.5px;top:5px" width="16" height="16" viewBox="0 0 16 16"><rect width="16" height="16" rx="1.5" fill="#3b5a9a"/><path d="M11.6 16V9.8h2l.3-2.4h-2.3V5.9c0-.7.2-1.2 1.2-1.2h1.2V2.6c-.2 0-1-.1-1.8-.1-1.8 0-3 1.1-3 3.100v1.800H7.200v2.400h2V16z" fill="#fff"/></svg></div>
<div class="a" style="z-index:23;left:1181.9px;top:4px;width:22px;height:18px;background:linear-gradient(90deg,rgba(183,198,219,0),#b9c8dc 75%)"></div>
<svg class="a" style="z-index:24;left:1203.5px;top:9.800px" width="8" height="8" viewBox="0 0 8 8"><path d="M1 1l5.600 5.600M6.600 1l-5.600 5.600" stroke="#444852" stroke-width="1.600"/></svg>
<svg class="a" style="left:1215.8px;top:0;z-index:20" width="147" height="26" viewBox="0 0 147 26"><defs><linearGradient id="tg9" x1="0" y1="0" x2="0" y2="1"><stop offset="0" stop-color="#fdfdfe"/><stop offset="1" stop-color="#f3f4f5"/></linearGradient></defs><path d="M0 25.500 C3 25.500 4.300 23.500 5.300 20.500 L9.800 6 C10.700 3 11.800 1.500 14.500 1.500 L131.200 1.500 C133.900 1.500 135 3 135.900 6 L140.400 20.500 C141.400 23.500 142.700 25.500 145.700 25.500 Z" fill="url(#tg9)" stroke="#8c99ab" stroke-width="1"/></svg>
<div class="a" style="z-index:21;left:0;top:0"><svg class="a" style="left:1231.4px;top:5px" width="16" height="16" viewBox="0 0 16 16"><path d="M8 .8V3" transform="rotate(0 8 8)" stroke="#f4b81c" stroke-width="1.3"/><path d="M8 .8V3" transform="rotate(30 8 8)" stroke="#f4b81c" stroke-width="1.3"/><path d="M8 .8V3" transform="rotate(60 8 8)" stroke="#f4b81c" stroke-width="1.3"/><path d="M8 .8V3" transform="rotate(90 8 8)" stroke="#f4b81c" stroke-width="1.3"/><path d="M8 .8V3" transform="rotate(120 8 8)" stroke="#f4b81c" stroke-width="1.3"/><path d="M8 .8V3" transform="rotate(150 8 8)" stroke="#f4b81c" stroke-width="1.3"/><path d="M8 .8V3" transform="rotate(180 8 8)" stroke="#f4b81c" stroke-width="1.3"/><path d="M8 .8V3" transform="rotate(210 8 8)" stroke="#f4b81c" stroke-width="1.3"/><path d="M8 .8V3" transform="rotate(240 8 8)" stroke="#f4b81c" stroke-width="1.3"/><path d="M8 .8V3" transform="rotate(270 8 8)" stroke="#f4b81c" stroke-width="1.3"/><path d="M8 .8V3" transform="rotate(300 8 8)" stroke="#f4b81c" stroke-width="1.3"/><path d="M8 .8V3" transform="rotate(330 8 8)" stroke="#f4b81c" stroke-width="1.3"/><circle cx="8" cy="8" r="4.2" fill="#f8c830" stroke="#f0a818" stroke-width=".8"/></svg></div>
<div class="a" style="z-index:23;left:1316.8px;top:4px;width:22px;height:18px;background:linear-gradient(90deg,rgba(246,247,248,0),#f6f7f8 75%)"></div>
<svg class="a" style="z-index:24;left:1338.4px;top:9.800px" width="8" height="8" viewBox="0 0 8 8"><path d="M1 1l5.600 5.600M6.600 1l-5.600 5.600" stroke="#444852" stroke-width="1.600"/></svg>
<svg class="a" style="left:1350.8px;top:0;z-index:5" width="147" height="26" viewBox="0 0 147 26"><defs><linearGradient id="tg10" x1="0" y1="0" x2="0" y2="1"><stop offset="0" stop-color="#c3d0e2"/><stop offset="1" stop-color="#b1c1d7"/></linearGradient></defs><path d="M0 25.500 C3 25.500 4.300 23.500 5.300 20.500 L9.800 6 C10.700 3 11.800 1.500 14.500 1.500 L131.200 1.500 C133.900 1.500 135 3 135.900 6 L140.400 20.500 C141.400 23.500 142.700 25.500 145.700 25.500 Z" fill="url(#tg10)" stroke="#7f92ae" stroke-width="1"/></svg>
<div class="a" style="z-index:21;left:0;top:0"><svg class="a" style="left:1366.4px;top:5px" width="16" height="16" viewBox="0 0 16 16"><rect width="16" height="16" fill="#f4f4f4"/><rect x="1" y="0" width="5" height="16" fill="#c8202c"/><path d="M6 0h3.200L6.800 8 10 16H6.500L4 9.200V16H6z" fill="#c8202c"/><path d="M11 0h4.500L10 8l5.500 8H11L6.500 8z" fill="#c8202c"/><path d="M7.500 0 L4.500 8 L7.500 16" fill="none" stroke="#fff" stroke-width="1.4"/></svg></div>
<div class="a" style="z-index:23;left:1451.8px;top:4px;width:22px;height:18px;background:linear-gradient(90deg,rgba(183,198,219,0),#b9c8dc 75%)"></div>
<svg class="a" style="z-index:24;left:1473.4px;top:9.800px" width="8" height="8" viewBox="0 0 8 8"><path d="M1 1l5.600 5.600M6.600 1l-5.600 5.600" stroke="#444852" stroke-width="1.600"/></svg>
<svg class="a" style="left:1485.7px;top:0;z-index:5" width="147" height="26" viewBox="0 0 147 26"><defs><linearGradient id="tg11" x1="0" y1="0" x2="0" y2="1"><stop offset="0" stop-color="#c3d0e2"/><stop offset="1" stop-color="#b1c1d7"/></linearGradient></defs><path d="M0 25.500 C3 25.500 4.300 23.500 5.300 20.500 L9.800 6 C10.700 3 11.800 1.500 14.500 1.500 L131.200 1.500 C133.900 1.500 135 3 135.900 6 L140.400 20.500 C141.400 23.500 142.700 25.500 145.700 25.500 Z" fill="url(#tg11)" stroke="#7f92ae" stroke-width="1"/></svg>
<div class="a" style="z-index:21;left:0;top:0"><svg class="a" style="left:1501.3px;top:5px" width="16" height="16" viewBox="0 0 16 16"><rect width="16" height="16" fill="#f4f4f4"/><rect x="1" y="0" width="5" height="16" fill="#c8202c"/><path d="M6 0h3.200L6.800 8 10 16H6.500L4 9.200V16H6z" fill="#c8202c"/><path d="M11 0h4.500L10 8l5.500 8H11L6.500 8z" fill="#c8202c"/><path d="M7.500 0 L4.500 8 L7.500 16" fill="none" stroke="#fff" stroke-width="1.4"/></svg></div>
<div class="a" style="z-index:23;left:1586.7px;top:4px;width:22px;height:18px;background:linear-gradient(90deg,rgba(183,198,219,0),#b9c8dc 75%)"></div>
<svg class="a" style="z-index:24;left:1608.3px;top:9.800px" width="8" height="8" viewBox="0 0 8 8"><path d="M1 1l5.600 5.600M6.600 1l-5.600 5.600" stroke="#444852" stroke-width="1.600"/></svg>
<svg class="a" style="left:1620.7px;top:0;z-index:5" width="147" height="26" viewBox="0 0 147 26"><defs><linearGradient id="tg12" x1="0" y1="0" x2="0" y2="1"><stop offset="0" stop-color="#c3d0e2"/><stop offset="1" stop-color="#b1c1d7"/></linearGradient></defs><path d="M0 25.500 C3 25.500 4.300 23.500 5.300 20.500 L9.800 6 C10.700 3 11.800 1.500 14.500 1.500 L131.200 1.500 C133.900 1.500 135 3 135.900 6 L140.400 20.500 C141.400 23.500 142.700 25.500 145.700 25.500 Z" fill="url(#tg12)" stroke="#7f92ae" stroke-width="1"/></svg>
<div class="a" style="z-index:21;left:0;top:0"><svg class="a" style="left:1636.3px;top:5px" width="17" height="16" viewBox="0 0 17 16"><circle cx="6" cy="8" r="5" fill="none" stroke="#8a8aa0" stroke-width="1"/><text x="8.5" y="11.5" font-size="8.5" font-weight="bold" fill="#1c1c8c" text-anchor="middle" font-family="Liberation Sans,sans-serif" textLength="15">PTC</text><path d="M1 13.500h10" stroke="#d02020" stroke-width="1.2"/></svg></div>
<div class="a" style="z-index:23;left:1721.7px;top:4px;width:22px;height:18px;background:linear-gradient(90deg,rgba(183,198,219,0),#b9c8dc 75%)"></div>
<svg class="a" style="z-index:24;left:1743.3px;top:9.800px" width="8" height="8" viewBox="0 0 8 8"><path d="M1 1l5.600 5.600M6.600 1l-5.600 5.600" stroke="#444852" stroke-width="1.600"/></svg>
<span class="t" style="left:36.2px;top:7.3px;font-size:11.8px;letter-spacing:0.462px;color:#3a3f4a;z-index:22;">Admin</span>
<span class="t" style="left:171px;top:7.3px;font-size:11.8px;letter-spacing:0.042px;color:#3a3f4a;z-index:22;">Roditeljski port</span>
<span class="t" style="left:306px;top:7.3px;font-size:11.8px;letter-spacing:0.189px;color:#3a3f4a;z-index:22;">Noćne avantur</span>
<span class="t" style="left:441px;top:7.3px;font-size:11.8px;letter-spacing:-0.353px;color:#3a3f4a;z-index:22;">6 Hours Of Slee</span>
<span class="t" style="left:576px;top:7.3px;font-size:11.8px;letter-spacing:0.107px;color:#3a3f4a;z-index:22;">white tableclotl</span>
<span class="t" style="left:711.5px;top:7.3px;font-size:11.8px;letter-spacing:0.127px;color:#3a3f4a;z-index:22;">Crédit Agricole</span>
<span class="t" style="left:846px;top:7.3px;font-size:11.8px;letter-spacing:0.042px;color:#3a3f4a;z-index:22;">Roditeljski port</span>
<span class="t" style="left:981px;top:7.3px;font-size:11.8px;letter-spacing:-0.042px;color:#3a3f4a;z-index:22;">Преглед - Goo</span>
<span class="t" style="left:1115px;top:7.3px;font-size:11.8px;letter-spacing:-0.041px;color:#3a3f4a;z-index:22;">SerbianMeteo</span>
<span class="t" style="left:1250px;top:7.3px;font-size:11.8px;letter-spacing:0.451px;color:#2a2a2a;z-index:22;">Ciklon &quot;Nićifor</span>
<span class="t" style="left:1385px;top:7.3px;font-size:11.8px;letter-spacing:-0.194px;color:#3a3f4a;z-index:22;">Blic Online | UP</span>
<span class="t" style="left:1520px;top:7.3px;font-size:11.8px;letter-spacing:-0.232px;color:#3a3f4a;z-index:22;">Blic Online | LEI</span>
<span class="t" style="left:1655px;top:7.3px;font-size:11.8px;letter-spacing:-0.553px;color:#3a3f4a;z-index:22;">RTS :: Oprez, ne</span>
<svg class="a" style="left:1762px;top:4px" width="36" height="17" viewBox="0 0 36 17"><path d="M2.500 1.500 H27 C29 1.500 30 2.500 30.800 4.500 L34 13 C34.600 14.800 34 15.500 32 15.500 H9 C7 15.500 6 14.500 5.200 12.500 L2 4 C1.400 2.200 1 1.500 2.500 1.500Z" fill="#a9bcd6" stroke="#7f93b0" stroke-width=".9"/></svg>
<div class="a" style="left:1814px;top:0;width:103px;height:18px;border:1px solid rgba(255,255,255,.55);border-top:0;border-radius:0 0 5px 5px;background:linear-gradient(180deg,#7d9cc6,#43679f 45%,#2e568f 50%,#4a74ad);overflow:hidden"><div class="a" style="left:56px;top:0;width:46px;height:18px;background:linear-gradient(180deg,#e8a49a,#cf5f50 45%,#bf3a28 50%,#d8684e)"></div><div class="a" style="left:28px;top:0;width:1px;height:18px;background:rgba(20,40,80,.55)"></div><div class="a" style="left:56px;top:0;width:1px;height:18px;background:rgba(20,40,80,.55)"></div></div>
<svg class="a" style="left:1814px;top:0" width="104" height="19" viewBox="0 0 104 19"><rect x="9" y="9.500" width="11" height="3.500" fill="#fff" stroke="#354a68" stroke-width=".8"/><g fill="none" stroke="#354a68" stroke-width="2.600"><rect x="40" y="3.500" width="8" height="6.500"/><rect x="36.500" y="6.500" width="8" height="6.500"/></g><g fill="none" stroke="#fff" stroke-width="1.300"><rect x="40" y="3.500" width="8" height="6.500"/><rect x="36.500" y="6.500" width="8" height="6.500" fill="#5a7cb0"/></g><path d="M74.500 4l9 8.500M83.500 4l-9 8.500" stroke="#53302c" stroke-width="4.200"/><path d="M74.500 4l9 8.500M83.500 4l-9 8.500" stroke="#fff" stroke-width="2.300"/></svg>
<div class="a" style="left:0;top:25px;width:1920px;height:60px;background:linear-gradient(180deg,#f7f7f7 0,#f1f1f1 33px,#ebebeb 34px,#e6e6e6 59px)"></div>
<div class="a" style="left:0;top:25px;width:1920px;height:1px;background:#a9b3c2"></div>
<div class="a" style="left:1217.85px;top:24.500px;width:141px;height:2px;background:#f6f6f7;z-index:30"></div>
<svg class="a" style="left:8px;top:32px" width="110" height="22" viewBox="0 0 110 22"><g fill="none" stroke="#c2c2c2" stroke-width="2.300"><path d="M16 10.500H3.500M9 4.500L3 10.500l6 6"/><path d="M31 10.500h12.500M38 4.500l6 6-6 6"/></g><path d="M72.800 6.200A6.200 6.200 0 1 0 74 12.500" fill="none" stroke="#4c4c4c" stroke-width="2.600"/><path d="M75.800 2.800v6.400h-6.400z" fill="#4c4c4c"/><path d="M97 2.800 L105.800 11 H103.200 V17.800 H99.200 V12.600 H94.800 V17.800 H90.800 V11 H88.200Z" fill="#4c4c4c"/><rect x="101.400" y="3.400" width="2.200" height="4" fill="#4c4c4c"/></svg>
<div class="a" style="left:124px;top:29.500px;width:1729px;height:26px;background:#fff;border:1px solid #b4b4b4;border-top-color:#a0a0a0;border-radius:3px;box-shadow:inset 0 1px 1px rgba(0,0,0,.08)"></div>
<svg class="a" style="left:131px;top:35px" width="12" height="15" viewBox="0 0 12 15"><path d="M.700.700h6.600l3.900 3.900v9.600H.700z" fill="#fff" stroke="#9a9a9a" stroke-width="1.100"/><path d="M7.300.700v3.900h3.900" fill="#e8e8e8" stroke="#9a9a9a" stroke-width="1"/></svg>
<span class="t" style="left:149.2px;top:34.6px;font-size:15.6px;letter-spacing:-0.052px;color:#111;">serbianmeteo.com</span>
<span class="t" style="left:277.2px;top:34.6px;font-size:15.6px;letter-spacing:0.254px;color:#888;">/ciklon-nicifor-28-30-decembar-2014-prava-zima-stize-na-balkan/</span>
<svg class="a" style="left:1830px;top:32px" width="20" height="20" viewBox="0 0 20 20"><path d="M10 1.800l2.500 5.400 5.900.700-4.400 4 1.200 5.800L10 14.800 4.800 17.700 6 11.900 1.600 7.900l5.900-.700z" fill="#fff" stroke="#555" stroke-width="1.300" stroke-linejoin="round"/></svg>
<svg class="a" style="left:1861px;top:33px" width="20" height="20" viewBox="0 0 20 20"><circle cx="10" cy="10" r="9.300" fill="#1a1a1a"/><circle cx="10" cy="10" r="5" fill="none" stroke="#e03050" stroke-width="2.400" stroke-dasharray="7.850 23.550"/><circle cx="10" cy="10" r="5" fill="none" stroke="#f0c020" stroke-width="2.400" stroke-dasharray="7.850 23.550" stroke-dashoffset="-7.850"/><circle cx="10" cy="10" r="5" fill="none" stroke="#30b050" stroke-width="2.400" stroke-dasharray="7.850 23.550" stroke-dashoffset="-15.700"/><circle cx="10" cy="10" r="5" fill="none" stroke="#3060e0" stroke-width="2.400" stroke-dasharray="7.850 23.550" stroke-dashoffset="-23.550"/><circle cx="10" cy="10" r="3" fill="#101020"/></svg>
<svg class="a" style="left:1897px;top:35px" width="15" height="15" viewBox="0 0 15 15"><path d="M.500 2.500h13.500M.500 7.200h13.500M.500 11.900h13.500" stroke="#4c4c4c" stroke-width="2.700"/></svg>
<svg class="a" style="left:7px;top:62px" width="15" height="15" viewBox="0 0 15 15"><g><rect x="1" y="1" width="3.200" height="3.200" fill="#e03c30"/><rect x="5.900" y="1" width="3.200" height="3.200" fill="#f0a020"/><rect x="10.800" y="1" width="3.200" height="3.200" fill="#4a88e8"/><rect x="1" y="5.900" width="3.200" height="3.200" fill="#30a050"/><rect x="5.900" y="5.900" width="3.200" height="3.200" fill="#e03c30"/><rect x="10.800" y="5.900" width="3.200" height="3.200" fill="#f0c020"/><rect x="1" y="10.800" width="3.200" height="3.200" fill="#f0a020"/><rect x="5.900" y="10.800" width="3.200" height="3.200" fill="#4a88e8"/><rect x="10.800" y="10.800" width="3.200" height="3.200" fill="#30a050"/></g></svg>
<svg class="a" style="left:66px;top:62px" width="17" height="15" viewBox="0 0 17 15"><path d="M1 3 Q1 1.500 2.500 1.500 H6.500 L8 3.300 H14.500 Q16 3.300 16 4.800 V12 Q16 13.500 14.500 13.500 H2.500 Q1 13.500 1 12Z" fill="#f4cf6c" stroke="#c79a2c" stroke-width=".9"/><path d="M1.600 5.200H15.400" stroke="#fbe6a4" stroke-width="1.200"/></svg>
<svg class="a" style="left:132px;top:62px" width="16" height="16" viewBox="0 0 16 16"><rect width="16" height="16" fill="#26292c"/><text x="8.200" y="12" font-size="13.500" font-weight="bold" fill="#fff" text-anchor="middle" font-family="Liberation Sans,sans-serif">p</text></svg>
<svg class="a" style="left:214px;top:62px" width="16" height="16" viewBox="0 0 16 16"><circle cx="8" cy="8" r="7.800" fill="#a47cb4"/><text x="8" y="7.500" font-size="4.800" fill="#fff" text-anchor="middle" font-family="Liberation Sans,sans-serif">CORD</text><text x="8" y="12.500" font-size="4.800" fill="#fff" text-anchor="middle" font-family="Liberation Sans,sans-serif">iPS</text></svg>
<svg class="a" style="left:364px;top:61px" width="17" height="17" viewBox="0 0 17 17"><rect x="0" y="1" width="9" height="9" fill="#d8d8d8"/><text x="4.500" y="8.500" font-size="8" fill="#444" text-anchor="middle" font-family="Noto Sans CJK SC,sans-serif">文</text><rect x="5.500" y="5" width="11.500" height="11.500" rx="1" fill="#4a90e8"/><text x="11.300" y="15" font-size="10.500" font-weight="bold" fill="#fff" text-anchor="middle" font-family="Liberation Sans,sans-serif">A</text><path d="M1 11l2.500 3.500 1-2z" fill="#3a70c8"/></svg>
<span class="t" style="left:28.4px;top:64.1px;font-size:12.2px;letter-spacing:-0.394px;color:#222;">Apps</span>
<span class="t" style="left:88px;top:64.1px;font-size:12.2px;letter-spacing:-0.505px;color:#222;">bebac</span>
<span class="t" style="left:153px;top:64.1px;font-size:12.2px;letter-spacing:-0.252px;color:#222;">Pipedrive</span>
<span class="t" style="left:235px;top:64.1px;font-size:12.2px;letter-spacing:-0.291px;color:#222;">Matične ćelije | Sera...</span>
<span class="t" style="left:385.4px;top:64.1px;font-size:12.2px;letter-spacing:-0.268px;color:#222;">Google преводилац</span>
<div class="a" style="left:1903px;top:85px;width:17px;height:912px;background:#f1f1f1;border-left:1px solid #e2e2e2"></div>
<div class="a" style="left:1905px;top:188px;width:13px;height:98px;background:#c1c1c1"></div>
<svg class="a" style="left:1903px;top:85px" width="17" height="912" viewBox="0 0 17 912"><path d="M4.500 11l4-4.500 4 4.500z" fill="#505050"/><path d="M4.500 901l4 4.500 4-4.500z" fill="#505050"/></svg><div class="a" style="left:-2px;top:976.500px;width:641px;height:22px;background:#e6e6e6;border:1px solid #c4c4c4;border-radius:0 5px 0 0"></div>
<span class="t" style="left:3px;top:980.8px;font-size:12px;letter-spacing:0.166px;color:#6a6a6a;">serbianmeteo.com/wordpress/wp-content/uploads/2014/12/anigif.gif</span>
<div class="a" style="left:0;top:997px;width:1920px;height:43px;background:linear-gradient(180deg,#ececec,#e3e3e3);border-top:1px solid #cfcfcf"></div>
<div class="a" style="left:4px;top:1000.500px;width:204px;height:35px;border:1px solid #c6c6c6;border-radius:3px;background:linear-gradient(180deg,#f7f7f7,#e9e9e9);box-shadow:0 1px 0 #f6f6f6"></div>
<div class="a" style="left:194px;top:1001.500px;width:1px;height:33px;background:#cdcdcd"></div>
<svg class="a" style="left:197px;top:1014px" width="9" height="6" viewBox="0 0 9 6"><path d="M1 1h7L4.500 5z" fill="#555"/></svg>
<svg class="a" style="left:13px;top:1007.500px" width="18" height="19" viewBox="0 0 18 19"><path d="M2.800 1h9l3.200 3.200V18H2.800z" fill="#fff" stroke="#9a9a9a" stroke-width=".9"/><rect x="0" y="5.500" width="16.500" height="8" fill="#1c7c2c"/><text x="8.200" y="12" font-size="6.800" font-weight="bold" fill="#fff" text-anchor="middle" font-family="Liberation Mono,monospace" textLength="13">GIF</text></svg>
<div class="a" style="left:212px;top:1000.500px;width:204px;height:35px;border:1px solid #c6c6c6;border-radius:3px;background:linear-gradient(180deg,#f7f7f7,#e9e9e9);box-shadow:0 1px 0 #f6f6f6"></div>
<div class="a" style="left:402px;top:1001.500px;width:1px;height:33px;background:#cdcdcd"></div>
<svg class="a" style="left:405px;top:1014px" width="9" height="6" viewBox="0 0 9 6"><path d="M1 1h7L4.500 5z" fill="#555"/></svg>
<svg class="a" style="left:221px;top:1007.500px" width="18" height="19" viewBox="0 0 18 19"><path d="M2.800 1h9l3.200 3.200V18H2.800z" fill="#fff" stroke="#9a9a9a" stroke-width=".9"/><rect x="0" y="5.500" width="16.500" height="8" fill="#848c14"/><text x="8.200" y="12" font-size="6.800" font-weight="bold" fill="#fff" text-anchor="middle" font-family="Liberation Mono,monospace" textLength="13">JPG</text></svg>
<div class="a" style="left:420px;top:1000.500px;width:204px;height:35px;border:1px solid #c6c6c6;border-radius:3px;background:linear-gradient(180deg,#f7f7f7,#e9e9e9);box-shadow:0 1px 0 #f6f6f6"></div>
<div class="a" style="left:610px;top:1001.500px;width:1px;height:33px;background:#cdcdcd"></div>
<svg class="a" style="left:613px;top:1014px" width="9" height="6" viewBox="0 0 9 6"><path d="M1 1h7L4.500 5z" fill="#555"/></svg>
<svg class="a" style="left:429px;top:1007.500px" width="18" height="19" viewBox="0 0 18 19"><path d="M2.800 1h9l3.200 3.200V18H2.800z" fill="#fff" stroke="#9a9a9a" stroke-width=".9"/><rect x="0" y="5.500" width="16.500" height="8" fill="#848c14"/><text x="8.200" y="12" font-size="6.800" font-weight="bold" fill="#fff" text-anchor="middle" font-family="Liberation Mono,monospace" textLength="13">JPG</text></svg>
<div class="a" style="left:628px;top:1000.500px;width:204px;height:35px;border:1px solid #c6c6c6;border-radius:3px;background:linear-gradient(180deg,#f7f7f7,#e9e9e9);box-shadow:0 1px 0 #f6f6f6"></div>
<div class="a" style="left:818px;top:1001.500px;width:1px;height:33px;background:#cdcdcd"></div>
<svg class="a" style="left:821px;top:1014px" width="9" height="6" viewBox="0 0 9 6"><path d="M1 1h7L4.500 5z" fill="#555"/></svg>
<svg class="a" style="left:638px;top:1008.500px" width="15" height="18" viewBox="0 0 15 18"><path d="M.800.800h9.200l4 4v12.400H.800z" fill="#fff" stroke="#a8a8a8" stroke-width="1"/><path d="M3 6h8M3 8.500h8M3 11h8M3 13.500h8" stroke="#d8d8d8" stroke-width="1"/></svg>
<div class="a" style="left:836px;top:1000.500px;width:204px;height:35px;border:1px solid #c6c6c6;border-radius:3px;background:linear-gradient(180deg,#f7f7f7,#e9e9e9);box-shadow:0 1px 0 #f6f6f6"></div>
<div class="a" style="left:1026px;top:1001.500px;width:1px;height:33px;background:#cdcdcd"></div>
<svg class="a" style="left:1029px;top:1014px" width="9" height="6" viewBox="0 0 9 6"><path d="M1 1h7L4.500 5z" fill="#555"/></svg>
<svg class="a" style="left:845px;top:1007.500px" width="18" height="19" viewBox="0 0 18 19"><path d="M2.800 1h9l3.200 3.200V18H2.800z" fill="#fff" stroke="#9a9a9a" stroke-width=".9"/><rect x="0" y="5.500" width="16.500" height="8" fill="#848c14"/><text x="8.200" y="12" font-size="6.800" font-weight="bold" fill="#fff" text-anchor="middle" font-family="Liberation Mono,monospace" textLength="13">JPG</text></svg>
<div class="a" style="left:1044px;top:1000.500px;width:204px;height:35px;border:1px solid #c6c6c6;border-radius:3px;background:linear-gradient(180deg,#f7f7f7,#e9e9e9);box-shadow:0 1px 0 #f6f6f6"></div>
<div class="a" style="left:1234px;top:1001.500px;width:1px;height:33px;background:#cdcdcd"></div>
<svg class="a" style="left:1237px;top:1014px" width="9" height="6" viewBox="0 0 9 6"><path d="M1 1h7L4.500 5z" fill="#555"/></svg>
<svg class="a" style="left:1053px;top:1007.500px" width="18" height="19" viewBox="0 0 18 19"><path d="M2.800 1h9l3.200 3.200V18H2.800z" fill="#fff" stroke="#9a9a9a" stroke-width=".9"/><rect x="0" y="5.500" width="16.500" height="8" fill="#848c14"/><text x="8.200" y="12" font-size="6.800" font-weight="bold" fill="#fff" text-anchor="middle" font-family="Liberation Mono,monospace" textLength="13">JPG</text></svg>
<div class="a" style="left:1252px;top:1000.500px;width:204px;height:35px;border:1px solid #c6c6c6;border-radius:3px;background:linear-gradient(180deg,#f7f7f7,#e9e9e9);box-shadow:0 1px 0 #f6f6f6"></div>
<div class="a" style="left:1442px;top:1001.500px;width:1px;height:33px;background:#cdcdcd"></div>
<svg class="a" style="left:1445px;top:1014px" width="9" height="6" viewBox="0 0 9 6"><path d="M1 1h7L4.500 5z" fill="#555"/></svg>
<svg class="a" style="left:1261px;top:1007.500px" width="18" height="19" viewBox="0 0 18 19"><path d="M2.800 1h9l3.200 3.200V18H2.800z" fill="#fff" stroke="#9a9a9a" stroke-width=".9"/><rect x="0" y="5.500" width="16.500" height="8" fill="#848c14"/><text x="8.200" y="12" font-size="6.800" font-weight="bold" fill="#fff" text-anchor="middle" font-family="Liberation Mono,monospace" textLength="13">JPG</text></svg>
<div class="a" style="left:1460px;top:1000.500px;width:204px;height:35px;border:1px solid #c6c6c6;border-radius:3px;background:linear-gradient(180deg,#f7f7f7,#e9e9e9);box-shadow:0 1px 0 #f6f6f6"></div>
<div class="a" style="left:1650px;top:1001.500px;width:1px;height:33px;background:#cdcdcd"></div>
<svg class="a" style="left:1653px;top:1014px" width="9" height="6" viewBox="0 0 9 6"><path d="M1 1h7L4.500 5z" fill="#555"/></svg>
<svg class="a" style="left:1469px;top:1007.500px" width="18" height="19" viewBox="0 0 18 19"><path d="M2.800 1h9l3.200 3.200V18H2.800z" fill="#fff" stroke="#9a9a9a" stroke-width=".9"/><rect x="0" y="5.500" width="16.500" height="8" fill="#848c14"/><text x="8.200" y="12" font-size="6.800" font-weight="bold" fill="#fff" text-anchor="middle" font-family="Liberation Mono,monospace" textLength="13">JPG</text></svg>
<span class="t" style="left:41.5px;top:1012.1px;font-size:12px;letter-spacing:0.314px;color:#222;">nicifor.gif</span>
<span class="t" style="left:249.5px;top:1012.1px;font-size:12px;letter-spacing:-0.145px;color:#222;">kuca za ng.jpg</span>
<span class="t" style="left:457.5px;top:1012.1px;font-size:12px;letter-spacing:0.038px;color:#222;">medenjaci.jpg</span>
<span class="t" style="left:665.5px;top:1012.1px;font-size:12px;letter-spacing:-0.184px;color:#222;">medenjaci.ashx</span>
<span class="t" style="left:873.5px;top:1012.1px;font-size:12px;letter-spacing:0.049px;color:#222;">beli stoljnja.jpg</span>
<span class="t" style="left:1081.5px;top:1012.1px;font-size:12px;letter-spacing:0.057px;color:#222;">materice fb.jpg</span>
<span class="t" style="left:1289.5px;top:1012.1px;font-size:12px;letter-spacing:0.011px;color:#222;">materice.jpg</span>
<span class="t" style="left:1497.5px;top:1012.1px;font-size:12px;letter-spacing:-0.184px;color:#222;">svece txt.jpg</span>
<svg class="a" style="left:1743px;top:1009.500px" width="14" height="15" viewBox="0 0 14 15"><path d="M4.200 1h5.600v6h3.400L7 13.800.800 7h3.400z" fill="#666"/></svg>
<span class="t" style="left:1763px;top:1012.8px;font-size:12px;letter-spacing:-0.254px;color:#23304a;text-decoration:underline;">Show all downloads…</span>
<svg class="a" style="left:1896px;top:1013px" width="9" height="9" viewBox="0 0 9 9"><path d="M1 1l7 7M8 1l-7 7" stroke="#444" stroke-width="1.800"/></svg>
<div class="a" style="left:0;top:1039.500px;width:1920px;height:41px;background:linear-gradient(90deg,#3f8fd2 0,#3d8ccf 280px,#3a83c6 560px,#2f6cb2 800px,#2b63aa 1100px,#27599f 1400px,#245497 1920px)"></div>
<div class="a" style="left:0;top:1039.500px;width:1920px;height:41px;background:linear-gradient(180deg,rgba(20,50,90,.55) 0,rgba(255,255,255,.28) 1.500px,rgba(255,255,255,.10) 45%,rgba(0,0,0,.04) 50%,rgba(0,0,0,.10) 100%)"></div>
<div class="a" style="left:1290px;top:1040px;width:160px;height:40px;overflow:hidden"><div class="a" style="left:40px;top:-10px;width:34px;height:70px;transform:skewX(38deg);background:linear-gradient(90deg,rgba(255,255,255,0),rgba(200,225,255,.38),rgba(255,255,255,0))"></div></div>
<svg class="a" style="left:5px;top:1040px" width="44" height="40" viewBox="0 0 44 40"><defs><radialGradient id="orb" cx=".5" cy=".35" r=".7"><stop offset="0" stop-color="#8cc8f4"/><stop offset=".55" stop-color="#2a78c4"/><stop offset="1" stop-color="#123c78"/></radialGradient></defs><circle cx="21.500" cy="19.500" r="17.500" fill="url(#orb)" stroke="#1a3c68" stroke-width="1.200"/><circle cx="21.500" cy="19.500" r="16.300" fill="none" stroke="rgba(255,255,255,.45)" stroke-width="1"/><path d="M13 12.500q4-2.300 8-.500l-1.600 6.500q-4-1.800-8 .500z" fill="#e8542c"/><path d="M23 12.500q4 1.800 8-.500l-1.600 6.500q-4 2.300-8 .500z" fill="#8cc63c"/><path d="M10.800 20.800q4-2.300 8-.500l-1.600 6.500q-4-1.800-8 .500z" fill="#34a4e8"/><path d="M20.800 20.800q4 1.800 8-.500l-1.600 6.500q-4 2.300-8 .500z" fill="#f8c428"/></svg>
<svg class="a" style="left:58px;top:1044px" width="9" height="34" viewBox="0 0 9 34"><rect x="1" y="1" width="1.500" height="1.500" fill="#1c3a64"/><rect x="4" y="1" width="1.500" height="1.500" fill="#1c3a64"/><rect x="7" y="1" width="1.500" height="1.500" fill="#1c3a64"/><rect x="1" y="4.2" width="1.500" height="1.500" fill="#1c3a64"/><rect x="4" y="4.2" width="1.500" height="1.500" fill="#1c3a64"/><rect x="7" y="4.2" width="1.500" height="1.500" fill="#1c3a64"/><rect x="1" y="7.4" width="1.500" height="1.500" fill="#1c3a64"/><rect x="4" y="7.4" width="1.500" height="1.500" fill="#1c3a64"/><rect x="7" y="7.4" width="1.500" height="1.500" fill="#1c3a64"/><rect x="1" y="10.6" width="1.500" height="1.500" fill="#1c3a64"/><rect x="4" y="10.6" width="1.500" height="1.500" fill="#1c3a64"/><rect x="7" y="10.6" width="1.500" height="1.500" fill="#1c3a64"/><rect x="1" y="13.8" width="1.500" height="1.500" fill="#1c3a64"/><rect x="4" y="13.8" width="1.500" height="1.500" fill="#1c3a64"/><rect x="7" y="13.8" width="1.500" height="1.500" fill="#1c3a64"/><rect x="1" y="17" width="1.500" height="1.500" fill="#1c3a64"/><rect x="4" y="17" width="1.500" height="1.500" fill="#1c3a64"/><rect x="7" y="17" width="1.500" height="1.500" fill="#1c3a64"/><rect x="1" y="20.2" width="1.500" height="1.500" fill="#1c3a64"/><rect x="4" y="20.2" width="1.500" height="1.500" fill="#1c3a64"/><rect x="7" y="20.2" width="1.500" height="1.500" fill="#1c3a64"/><rect x="1" y="23.4" width="1.500" height="1.500" fill="#1c3a64"/><rect x="4" y="23.4" width="1.500" height="1.500" fill="#1c3a64"/><rect x="7" y="23.4" width="1.500" height="1.500" fill="#1c3a64"/><rect x="1" y="26.6" width="1.500" height="1.500" fill="#1c3a64"/><rect x="4" y="26.6" width="1.500" height="1.500" fill="#1c3a64"/><rect x="7" y="26.6" width="1.500" height="1.500" fill="#1c3a64"/><rect x="1" y="29.8" width="1.500" height="1.500" fill="#1c3a64"/><rect x="4" y="29.8" width="1.500" height="1.500" fill="#1c3a64"/><rect x="7" y="29.8" width="1.500" height="1.500" fill="#1c3a64"/></svg>
<svg class="a" style="left:88px;top:1044px" width="34" height="34" viewBox="0 0 34 34"><path d="M2 5h10l2 3h17v20H2z" fill="#f0d078" stroke="#b8943c" stroke-width="1"/><path d="M5 9h24v4H5z" fill="#fff8dc"/><rect x="4" y="7" width="4" height="2" fill="#d04030"/><rect x="12" y="7" width="4" height="2" fill="#40a048"/><rect x="19" y="7" width="4" height="2" fill="#3870c8"/><path d="M2 13h29v15H2z" fill="#f6de90" stroke="#b8943c" stroke-width="1"/><path d="M8 20h17l2 10H6z" fill="#9cc8e8" stroke="#5a8ab8" stroke-width="1"/><path d="M10 24h13v6H10z" fill="#e8f4fc"/></svg>
<svg class="a" style="left:150px;top:1044px" width="34" height="34" viewBox="0 0 34 34"><ellipse cx="16" cy="17" rx="15" ry="6.500" transform="rotate(-35 16 17)" fill="none" stroke="#f0c430" stroke-width="2.400"/><text x="17" y="29" font-size="36" font-weight="bold" font-style="italic" fill="#3cb0f0" text-anchor="middle" font-family="Liberation Sans,sans-serif">e</text><path d="M3 24 Q9 19 14 15" stroke="#f0c430" stroke-width="2.400" fill="none"/></svg>
<svg class="a" style="left:214px;top:1046px" width="30" height="30" viewBox="0 0 30 30"><rect x="6" y="3" width="21" height="24" fill="#c8dcf0" stroke="#8aa8cc" stroke-width="1"/><rect x="2" y="4" width="21" height="24" fill="#dce8f6" stroke="#8aa8cc" stroke-width="1"/><circle cx="12" cy="16" r="8.800" fill="#f08020" stroke="#fff" stroke-width="1.600"/><path d="M9.500 11.500l7 4.500-7 4.500z" fill="#fff"/></svg>
<div class="a" style="left:261.5px;top:1041px;width:58.8px;height:39px;border:1px solid rgba(20,50,90,.75);border-bottom:0;border-radius:3px 3px 0 0;background:linear-gradient(180deg,rgba(255,255,255,0.62),rgba(255,255,255,0.42) 48%,rgba(255,255,255,0.3) 52%,rgba(255,255,255,0.5));box-shadow:inset 0 0 0 1px rgba(255,255,255,.45)"></div>
<div class="a" style="left:324px;top:1041px;width:58px;height:39px;border:1px solid rgba(20,50,90,.75);border-bottom:0;border-radius:3px 3px 0 0;background:linear-gradient(180deg,rgba(255,255,255,0.36),rgba(255,255,255,0.2) 48%,rgba(255,255,255,0.1) 52%,rgba(255,255,255,0.22));box-shadow:inset 0 0 0 1px rgba(255,255,255,.45)"></div>
<div class="a" style="left:386px;top:1041px;width:57.8px;height:39px;border:1px solid rgba(20,50,90,.75);border-bottom:0;border-radius:3px 3px 0 0;background:linear-gradient(180deg,rgba(255,255,255,0.36),rgba(255,255,255,0.2) 48%,rgba(255,255,255,0.1) 52%,rgba(255,255,255,0.22));box-shadow:inset 0 0 0 1px rgba(255,255,255,.45)"></div>
<div class="a" style="left:447.5px;top:1041px;width:58.1px;height:39px;border:1px solid rgba(20,50,90,.75);border-bottom:0;border-radius:3px 3px 0 0;background:linear-gradient(180deg,rgba(255,255,255,0.36),rgba(255,255,255,0.2) 48%,rgba(255,255,255,0.1) 52%,rgba(255,255,255,0.22));box-shadow:inset 0 0 0 1px rgba(255,255,255,.45)"></div>
<div class="a" style="left:509.4px;top:1041px;width:58.4px;height:39px;border:1px solid rgba(20,50,90,.75);border-bottom:0;border-radius:3px 3px 0 0;background:linear-gradient(180deg,rgba(255,255,255,0.36),rgba(255,255,255,0.2) 48%,rgba(255,255,255,0.1) 52%,rgba(255,255,255,0.22));box-shadow:inset 0 0 0 1px rgba(255,255,255,.45)"></div>
<svg class="a" style="left:275px;top:1044.500px" width="32" height="32" viewBox="0 0 32 32"><circle cx="16" cy="16" r="14.500" fill="#dd4b3e"/><path d="M16 16 L3.400 8.800 A14.500 14.500 0 0 0 10.800 29.600 Z" fill="#1da462"/><path d="M16 16 L10.800 29.600 A14.500 14.500 0 0 0 30.500 16 A14.500 14.500 0 0 0 29.500 10.800 Z" fill="#ffcd46"/><path d="M16 16 L29.500 10.800 A14.500 14.500 0 0 0 3.400 8.800Z" fill="#dd4b3e"/><circle cx="16" cy="16" r="6.600" fill="#fff"/><circle cx="16" cy="16" r="5.200" fill="#4c8bf5"/></svg>
<svg class="a" style="left:337px;top:1043.500px" width="34" height="34" viewBox="0 0 34 34"><circle cx="10" cy="10" r="8.500" fill="#12a5f4"/><circle cx="24" cy="24" r="8.500" fill="#12a5f4"/><circle cx="17" cy="17" r="13" fill="#12a5f4"/><text x="17" y="26.500" font-size="26" font-weight="bold" fill="#fff" text-anchor="middle" font-family="Liberation Sans,sans-serif">S</text></svg>
<svg class="a" style="left:399px;top:1044px" width="34" height="34" viewBox="0 0 34 34"><path d="M9 4h18l-3 26H3z" fill="#e8f0f4" stroke="#6a8aa0" stroke-width="1"/><path d="M10 6h15.500l-2.400 21H5.500z" fill="#8cccec"/><path d="M10 6h15.500l-1 9Q15 13 7 20z" fill="#c4e6f6"/><path d="M10 3.500v3M13 3.500v3M16 3.500v3M19 3.500v3M22 3.500v3M25 3.500v3" stroke="#50606c" stroke-width="1.200"/><path d="M25 30l4-24-2.400-1.800-3 25.800z" fill="#a8b8c4"/></svg>
<svg class="a" style="left:463px;top:1045px" width="28" height="28" viewBox="0 0 28 28"><rect width="28" height="28" fill="#1c2460" stroke="#5c6cc0" stroke-width="1.600"/><text x="14" y="20" font-size="16.500" font-weight="bold" fill="#9cb0ff" text-anchor="middle" font-family="Liberation Sans,sans-serif">Ps</text></svg>
<svg class="a" style="left:522px;top:1045px" width="34" height="32" viewBox="0 0 34 32"><g fill="#111" stroke="#fff" stroke-width="1.400" stroke-linejoin="round"><circle cx="11" cy="5" r="3.600"/><circle cx="23" cy="5" r="3.600"/><path d="M2 17l9-7.500 6 5 6-5 9 7.500-3 3-4-3v8l3.500 0L18 31l-6.500-6h3.500v-8l-4 3-3-3z"/></g></svg>
<svg class="a" style="left:1725px;top:1044px" width="9" height="34" viewBox="0 0 9 34"><rect x="1" y="1" width="1.500" height="1.500" fill="#16305a"/><rect x="4" y="1" width="1.500" height="1.500" fill="#16305a"/><rect x="7" y="1" width="1.500" height="1.500" fill="#16305a"/><rect x="1" y="4.2" width="1.500" height="1.500" fill="#16305a"/><rect x="4" y="4.2" width="1.500" height="1.500" fill="#16305a"/><rect x="7" y="4.2" width="1.500" height="1.500" fill="#16305a"/><rect x="1" y="7.4" width="1.500" height="1.500" fill="#16305a"/><rect x="4" y="7.4" width="1.500" height="1.500" fill="#16305a"/><rect x="7" y="7.4" width="1.500" height="1.500" fill="#16305a"/><rect x="1" y="10.6" width="1.500" height="1.500" fill="#16305a"/><rect x="4" y="10.6" width="1.500" height="1.500" fill="#16305a"/><rect x="7" y="10.6" width="1.500" height="1.500" fill="#16305a"/><rect x="1" y="13.8" width="1.500" height="1.500" fill="#16305a"/><rect x="4" y="13.8" width="1.500" height="1.500" fill="#16305a"/><rect x="7" y="13.8" width="1.500" height="1.500" fill="#16305a"/><rect x="1" y="17" width="1.500" height="1.500" fill="#16305a"/><rect x="4" y="17" width="1.500" height="1.500" fill="#16305a"/><rect x="7" y="17" width="1.500" height="1.500" fill="#16305a"/><rect x="1" y="20.2" width="1.500" height="1.500" fill="#16305a"/><rect x="4" y="20.2" width="1.500" height="1.500" fill="#16305a"/><rect x="7" y="20.2" width="1.500" height="1.500" fill="#16305a"/><rect x="1" y="23.4" width="1.500" height="1.500" fill="#16305a"/><rect x="4" y="23.4" width="1.500" height="1.500" fill="#16305a"/><rect x="7" y="23.4" width="1.500" height="1.500" fill="#16305a"/><rect x="1" y="26.6" width="1.500" height="1.500" fill="#16305a"/><rect x="4" y="26.6" width="1.500" height="1.500" fill="#16305a"/><rect x="7" y="26.6" width="1.500" height="1.500" fill="#16305a"/><rect x="1" y="29.8" width="1.500" height="1.500" fill="#16305a"/><rect x="4" y="29.8" width="1.500" height="1.500" fill="#16305a"/><rect x="7" y="29.8" width="1.500" height="1.500" fill="#16305a"/></svg>
<span class="t" style="left:1742.5px;top:1052.3px;font-size:12px;letter-spacing:-1.672px;color:#fff;">SR</span>
<span class="t" style="left:1859.5px;top:1047.1px;font-size:12px;letter-spacing:-0.535px;color:#fff;">11:07</span>
<span class="t" style="left:1846px;top:1063.8px;font-size:12px;letter-spacing:-0.729px;color:#fff;">27.12.2014</span>
<svg class="a" style="left:1772px;top:1050px" width="70" height="22" viewBox="0 0 70 22"><path d="M1.500 13.500l4-4.500 4 4.500z" fill="#fff"/><g><rect x="24.500" y="4.500" width="11" height="8.500" fill="#dfe8f4" stroke="#fff" stroke-width="1.200"/><path d="M27 16.500h8M31 13v3.500" stroke="#fff" stroke-width="1.400"/><path d="M21 3v14M19 6h4" stroke="#fff" stroke-width="1.200"/></g><path d="M47 8.500h3.500l4-3.800v12.600l-4-3.800H47z" fill="#fff"/><path d="M57 7.500q2.500 3.500 0 7M59.800 5.500q4 5.500 0 11" fill="none" stroke="#fff" stroke-width="1.200"/></svg>
<div class="a" style="left:1905px;top:1040px;width:15px;height:40px;border-left:1px solid rgba(20,40,80,.7);background:linear-gradient(180deg,rgba(255,255,255,.35),rgba(255,255,255,.08) 50%,rgba(255,255,255,.18));box-shadow:inset 1px 0 0 rgba(255,255,255,.4)"></div></body></html>
